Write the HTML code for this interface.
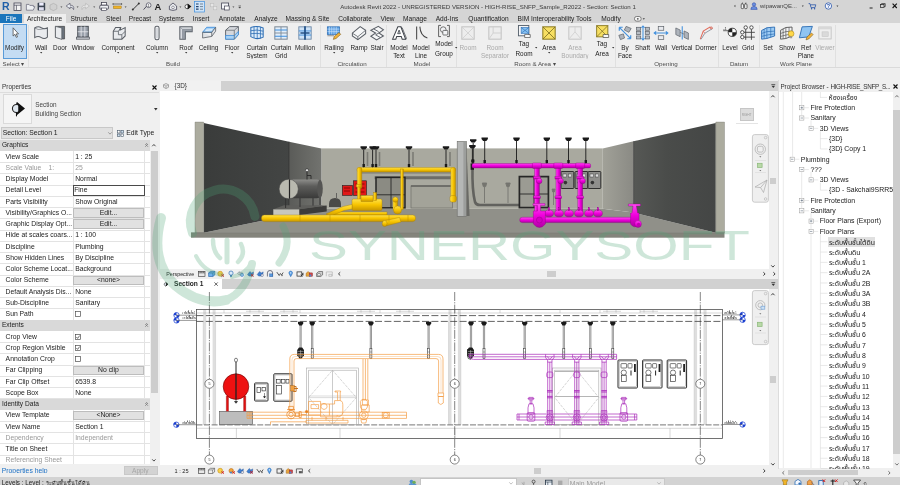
<!DOCTYPE html><html><head><meta charset="utf-8"><title>Autodesk Revit 2022</title><style>
html,body{margin:0;padding:0}
body{width:900px;height:485px;overflow:hidden;position:relative;background:#eeeeee;font-family:"Liberation Sans",sans-serif;font-size:6.4px;color:#222}
.a{position:absolute;white-space:nowrap}
.c{position:absolute;white-space:nowrap;transform:translateX(-50%);text-align:center}
.t{position:absolute;white-space:nowrap;line-height:8px;height:8px}
svg{position:absolute;overflow:visible}
</style></head><body><div id="root" style="position:absolute;left:0;top:0;width:900px;height:485px;will-change:transform">
<div class="a" style="left:0px;top:0px;width:900px;height:13.5px;background:#d5d5d5;"></div>
<div class="t" style="left:488px;top:2.5px;transform:translateX(-50%);font-size:6.1px;color:#3c3c3c">Autodesk Revit 2022 - UNREGISTERED VERSION - HIGH-RISE_SNFP_Sample_R2022 - Section: Section 1</div>
<div class="a" style="left:0px;top:13.5px;width:900px;height:9.5px;background:#d5d5d5;"></div>
<div class="a" style="left:0px;top:14px;width:21.5px;height:8.7px;background:#1b75bb;"></div>
<div class="a" style="left:23.5px;top:13.8px;width:42px;height:9.5px;background:#eeeeee;"></div>
<div class="t" style="left:11px;top:15.100000000000001px;transform:translateX(-50%);color:#fff;font-size:6.6px">File</div>
<div class="t" style="left:44.5px;top:15.100000000000001px;transform:translateX(-50%);color:#222;font-size:6.6px">Architecture</div>
<div class="t" style="left:84px;top:15.100000000000001px;transform:translateX(-50%);color:#222;font-size:6.6px">Structure</div>
<div class="t" style="left:113.5px;top:15.100000000000001px;transform:translateX(-50%);color:#222;font-size:6.6px">Steel</div>
<div class="t" style="left:140px;top:15.100000000000001px;transform:translateX(-50%);color:#222;font-size:6.6px">Precast</div>
<div class="t" style="left:171.5px;top:15.100000000000001px;transform:translateX(-50%);color:#222;font-size:6.6px">Systems</div>
<div class="t" style="left:201px;top:15.100000000000001px;transform:translateX(-50%);color:#222;font-size:6.6px">Insert</div>
<div class="t" style="left:232px;top:15.100000000000001px;transform:translateX(-50%);color:#222;font-size:6.6px">Annotate</div>
<div class="t" style="left:266px;top:15.100000000000001px;transform:translateX(-50%);color:#222;font-size:6.6px">Analyze</div>
<div class="t" style="left:307.5px;top:15.100000000000001px;transform:translateX(-50%);color:#222;font-size:6.6px">Massing &amp; Site</div>
<div class="t" style="left:355px;top:15.100000000000001px;transform:translateX(-50%);color:#222;font-size:6.6px">Collaborate</div>
<div class="t" style="left:387.5px;top:15.100000000000001px;transform:translateX(-50%);color:#222;font-size:6.6px">View</div>
<div class="t" style="left:415px;top:15.100000000000001px;transform:translateX(-50%);color:#222;font-size:6.6px">Manage</div>
<div class="t" style="left:447px;top:15.100000000000001px;transform:translateX(-50%);color:#222;font-size:6.6px">Add-Ins</div>
<div class="t" style="left:488.5px;top:15.100000000000001px;transform:translateX(-50%);color:#222;font-size:6.6px">Quantification</div>
<div class="t" style="left:554.5px;top:15.100000000000001px;transform:translateX(-50%);color:#222;font-size:6.6px">BIM Interoperability Tools</div>
<div class="t" style="left:611px;top:15.100000000000001px;transform:translateX(-50%);color:#222;font-size:6.6px">Modify</div>
<div class="a" style="left:0px;top:23px;width:900px;height:46px;background:#efefef;"></div>
<div class="a" style="left:0px;top:69px;width:900px;height:11px;background:#eeeeee;"></div>
<div class="a" style="left:0px;top:66.6px;width:900px;height:0.7px;background:#dadada;"></div>
<div class="a" style="left:3px;top:24px;width:23.5px;height:34.5px;background:#c4dcf3;border:0.8px solid #5a9bd8;box-sizing:border-box"></div>
<div class="t" style="left:14.5px;top:43.5px;transform:translateX(-50%);color:#222">Modify</div>
<div class="t" style="left:41px;top:43.5px;transform:translateX(-50%);color:#222">Wall</div>
<div class="t" style="left:60px;top:43.5px;transform:translateX(-50%);color:#222">Door</div>
<div class="t" style="left:83px;top:43.5px;transform:translateX(-50%);color:#222">Window</div>
<div class="t" style="left:118px;top:43.5px;transform:translateX(-50%);color:#222">Component</div>
<div class="t" style="left:157px;top:43.5px;transform:translateX(-50%);color:#222">Column</div>
<div class="t" style="left:186px;top:43.5px;transform:translateX(-50%);color:#222">Roof</div>
<div class="t" style="left:208.5px;top:43.5px;transform:translateX(-50%);color:#222">Ceiling</div>
<div class="t" style="left:232px;top:43.5px;transform:translateX(-50%);color:#222">Floor</div>
<div class="t" style="left:257px;top:43.5px;transform:translateX(-50%);color:#222">Curtain</div>
<div class="t" style="left:281px;top:43.5px;transform:translateX(-50%);color:#222">Curtain</div>
<div class="t" style="left:305px;top:43.5px;transform:translateX(-50%);color:#222">Mullion</div>
<div class="t" style="left:334px;top:43.5px;transform:translateX(-50%);color:#222">Railing</div>
<div class="t" style="left:359px;top:43.5px;transform:translateX(-50%);color:#222">Ramp</div>
<div class="t" style="left:377px;top:43.5px;transform:translateX(-50%);color:#222">Stair</div>
<div class="t" style="left:399px;top:43.5px;transform:translateX(-50%);color:#222">Model</div>
<div class="t" style="left:421px;top:43.5px;transform:translateX(-50%);color:#222">Model</div>
<div class="t" style="left:444px;top:40.4px;transform:translateX(-50%);color:#222">Model</div>
<div class="t" style="left:468px;top:43.5px;transform:translateX(-50%);color:#aaa">Room</div>
<div class="t" style="left:495px;top:43.5px;transform:translateX(-50%);color:#aaa">Room</div>
<div class="t" style="left:524px;top:40.4px;transform:translateX(-50%);color:#222">Tag</div>
<div class="t" style="left:549px;top:43.5px;transform:translateX(-50%);color:#222">Area</div>
<div class="t" style="left:575px;top:43.5px;transform:translateX(-50%);color:#aaa">Area</div>
<div class="t" style="left:602px;top:40.4px;transform:translateX(-50%);color:#222">Tag</div>
<div class="t" style="left:625px;top:43.5px;transform:translateX(-50%);color:#222">By</div>
<div class="t" style="left:642.5px;top:43.5px;transform:translateX(-50%);color:#222">Shaft</div>
<div class="t" style="left:661px;top:43.5px;transform:translateX(-50%);color:#222">Wall</div>
<div class="t" style="left:682px;top:43.5px;transform:translateX(-50%);color:#222">Vertical</div>
<div class="t" style="left:706px;top:43.5px;transform:translateX(-50%);color:#222">Dormer</div>
<div class="t" style="left:730px;top:43.5px;transform:translateX(-50%);color:#222">Level</div>
<div class="t" style="left:748px;top:43.5px;transform:translateX(-50%);color:#222">Grid</div>
<div class="t" style="left:768px;top:43.5px;transform:translateX(-50%);color:#222">Set</div>
<div class="t" style="left:787px;top:43.5px;transform:translateX(-50%);color:#222">Show</div>
<div class="t" style="left:806px;top:43.5px;transform:translateX(-50%);color:#222">Ref</div>
<div class="t" style="left:825px;top:43.5px;transform:translateX(-50%);color:#aaa">Viewer</div>
<div class="t" style="left:257px;top:52.9px;transform:translateX(-50%);height:6.6px;overflow:hidden;color:#222"><div style="margin-top:-0.7px">System</div></div>
<div class="t" style="left:281px;top:52.9px;transform:translateX(-50%);height:6.6px;overflow:hidden;color:#222"><div style="margin-top:-0.7px">Grid</div></div>
<div class="t" style="left:399px;top:52.9px;transform:translateX(-50%);height:6.6px;overflow:hidden;color:#222"><div style="margin-top:-0.7px">Text</div></div>
<div class="t" style="left:421px;top:52.9px;transform:translateX(-50%);height:6.6px;overflow:hidden;color:#222"><div style="margin-top:-0.7px">Line</div></div>
<div class="t" style="left:444px;top:50px;transform:translateX(-50%);color:#222">Group</div>
<div class="t" style="left:495px;top:52.9px;transform:translateX(-50%);height:6.6px;overflow:hidden;color:#aaa"><div style="margin-top:-0.7px">Separator</div></div>
<div class="t" style="left:524px;top:50px;transform:translateX(-50%);color:#222">Room</div>
<div class="t" style="left:575px;top:52.9px;transform:translateX(-50%);height:6.6px;overflow:hidden;color:#aaa"><div style="margin-top:-0.7px">Boundary</div></div>
<div class="t" style="left:602px;top:50px;transform:translateX(-50%);color:#222">Area</div>
<div class="t" style="left:625px;top:52.9px;transform:translateX(-50%);height:6.6px;overflow:hidden;color:#222"><div style="margin-top:-0.7px">Face</div></div>
<div class="t" style="left:806px;top:52.9px;transform:translateX(-50%);height:6.6px;overflow:hidden;color:#222"><div style="margin-top:-0.7px">Plane</div></div>
<div class="t" style="left:13.5px;top:60.3px;transform:translateX(-50%);color:#4a4a4a;font-size:6.2px">Select ▾</div>
<div class="t" style="left:173px;top:60.3px;transform:translateX(-50%);color:#4a4a4a;font-size:6.2px">Build</div>
<div class="t" style="left:352px;top:60.3px;transform:translateX(-50%);color:#4a4a4a;font-size:6.2px">Circulation</div>
<div class="t" style="left:422px;top:60.3px;transform:translateX(-50%);color:#4a4a4a;font-size:6.2px">Model</div>
<div class="t" style="left:535px;top:60.3px;transform:translateX(-50%);color:#4a4a4a;font-size:6.2px">Room &amp; Area ▾</div>
<div class="t" style="left:666px;top:60.3px;transform:translateX(-50%);color:#4a4a4a;font-size:6.2px">Opening</div>
<div class="t" style="left:739px;top:60.3px;transform:translateX(-50%);color:#4a4a4a;font-size:6.2px">Datum</div>
<div class="t" style="left:796px;top:60.3px;transform:translateX(-50%);color:#4a4a4a;font-size:6.2px">Work Plane</div>
<div class="a" style="left:27.5px;top:25px;width:0.6px;height:42px;background:#e0e0e0;"></div>
<div class="a" style="left:319.5px;top:25px;width:0.6px;height:42px;background:#e0e0e0;"></div>
<div class="a" style="left:386px;top:25px;width:0.6px;height:42px;background:#e0e0e0;"></div>
<div class="a" style="left:455.5px;top:25px;width:0.6px;height:42px;background:#e0e0e0;"></div>
<div class="a" style="left:615px;top:25px;width:0.6px;height:42px;background:#e0e0e0;"></div>
<div class="a" style="left:718px;top:25px;width:0.6px;height:42px;background:#e0e0e0;"></div>
<div class="a" style="left:758.5px;top:25px;width:0.6px;height:42px;background:#e0e0e0;"></div>
<div class="a" style="left:835px;top:25px;width:0.6px;height:42px;background:#e0e0e0;"></div>
<svg style="left:8.75px;top:26.85px;opacity:1" width="11.5" height="11.5" viewBox="0 0 14 14"><path d="M5 1V11L7.2 8.9L8.9 12.6L10.4 12L8.7 8.4H11.6Z" fill="#fff" stroke="#444" stroke-width="0.9"/></svg>
<svg style="left:33.0px;top:24.799999999999997px;opacity:1" width="16" height="16" viewBox="0 0 14 14"><path d="M1.5 2.6Q4.5 0.6 7.3 2.4Q10 4 12.6 2.6V10.6Q10 12.8 7.3 11Q4.5 9.2 1.5 11Z" fill="#e9ebee" stroke="#5a5f66" stroke-width="0.9"/><path d="M1.5 2.6Q4.5 4.6 7.3 3.8Q10 3 12.6 2.6" fill="none" stroke="#5a5f66" stroke-width="0.5"/></svg>
<svg style="left:52.0px;top:24.799999999999997px;opacity:1" width="16" height="16" viewBox="0 0 14 14"><path d="M3 1.2H11V12.2H9.5L3 10.8Z" fill="#6b727c" stroke="#444" stroke-width="0.6"/><path d="M3 1.2L8.6 2.6V12.6L3 10.8Z" fill="#e9ebee" stroke="#5a5f66" stroke-width="0.7"/></svg>
<svg style="left:75.0px;top:24.799999999999997px;opacity:1" width="16" height="16" viewBox="0 0 14 14"><rect x="2.4" y="1.2" width="9.2" height="9.4" fill="#9aa1ab" stroke="#4a4f56" stroke-width="0.9"/><path d="M5.4 1.2V10.6M8.6 1.2V10.6M2.4 5.9H11.6" stroke="#e8eaee" stroke-width="0.7"/><rect x="1.3" y="10.6" width="11.4" height="1.8" fill="#c9ccd2" stroke="#4a4f56" stroke-width="0.6"/></svg>
<svg style="left:110.5px;top:24.799999999999997px;opacity:1" width="16" height="16" viewBox="0 0 14 14"><path d="M2 5.5L4 2.2H8.5L8 4.5L12.4 2.2V9.6L9.5 12.4H2Z" fill="#e9ebee" stroke="#5a5f66" stroke-width="0.9"/><path d="M2 5.5H6.5V8.5H9.5V12.4M6.5 5.5L8.5 2.2M9.5 8.5L12.4 5.5" fill="none" stroke="#5a5f66" stroke-width="0.7"/></svg>
<svg style="left:149.0px;top:24.799999999999997px;opacity:1" width="16" height="16" viewBox="0 0 14 14"><rect x="5.2" y="1" width="3.6" height="12" rx="1.6" fill="#f4f5f7" stroke="#5a5f66" stroke-width="0.9"/><path d="M7 2.5V11.5" stroke="#b5b9bf" stroke-width="0.8"/></svg>
<svg style="left:178.0px;top:24.799999999999997px;opacity:1" width="16" height="16" viewBox="0 0 14 14"><path d="M1.6 1.6H12.4V5.8H6.4V12.4H1.6Z" fill="#d9dce1" stroke="#5a5f66" stroke-width="0.9"/><path d="M1.6 1.6L4 3.8H12.4M4 3.8V12.4" fill="none" stroke="#8a9099" stroke-width="0.7"/><path d="M4 3.8H12.4V5.8H6.4V12.4H4Z" fill="#7d848e" opacity="0.7"/></svg>
<svg style="left:200.5px;top:24.799999999999997px;opacity:1" width="16" height="16" viewBox="0 0 14 14"><path d="M1.4 6.4L5 2H12.8L9.4 6.4Z" fill="#a9d2f5" stroke="#3f8fdd" stroke-width="0.8"/><path d="M1.4 6.4H9.4L12.8 2V5.4L9.4 10V6.4M1.4 6.4V11.4L9.4 10" fill="#dfe2e6" stroke="#5a5f66" stroke-width="0.7"/><path d="M4 4.6L10 4.2" stroke="#fff" stroke-width="0.8"/></svg>
<svg style="left:224.0px;top:24.799999999999997px;opacity:1" width="16" height="16" viewBox="0 0 14 14"><path d="M1.4 4.6L5 1.4H12.6V8.4L9 12.4H1.4Z" fill="#d5d8dd" stroke="#5a5f66" stroke-width="0.8"/><path d="M1.4 9.2H9L12.6 5.6V8.4L9 12.4H1.4Z" fill="#a9d2f5" stroke="#3f8fdd" stroke-width="0.7"/><path d="M9 4.6V12.4M1.4 4.6H9L12.6 1.4" fill="none" stroke="#5a5f66" stroke-width="0.6"/></svg>
<svg style="left:249.0px;top:24.799999999999997px;opacity:1" width="16" height="16" viewBox="0 0 14 14"><path d="M1.6 2.2Q7 0.4 12.4 2.6V10.6Q7 13.4 1.6 10.2Z" fill="#dcecfa" stroke="#2f6fb5" stroke-width="0.9"/><path d="M1.6 5Q7 3.6 12.4 5.4M1.6 7.6Q7 6.8 12.4 8M4.4 1.6V11.4M7.2 1.4V12M10 1.8V11.6" fill="none" stroke="#2f6fb5" stroke-width="0.7"/></svg>
<svg style="left:273.0px;top:24.799999999999997px;opacity:1" width="16" height="16" viewBox="0 0 14 14"><rect x="1.6" y="1.6" width="10.8" height="10.8" fill="#e2eefa" stroke="#7f8a96" stroke-width="0.9"/><path d="M7 1.6V12.4M1.6 7H12.4" stroke="#7f8a96" stroke-width="0.8"/><path d="M1.6 4.3H12.4M1.6 9.8H12.4" stroke="#3f8fdd" stroke-width="0.9"/></svg>
<svg style="left:297.0px;top:24.799999999999997px;opacity:1" width="16" height="16" viewBox="0 0 14 14"><rect x="1.6" y="1.6" width="10.8" height="10.8" fill="#cfe3f7" stroke="#6f8aa6" stroke-width="0.8"/><path d="M1.6 5.2H12.4M1.6 8.8H12.4" stroke="#3f8fdd" stroke-width="0.8"/><path d="M7 1.2V12.8M3 7H11" stroke="#1f4f86" stroke-width="1.5"/></svg>
<svg style="left:326.0px;top:24.799999999999997px;opacity:1" width="16" height="16" viewBox="0 0 14 14"><rect x="1.2" y="1.6" width="10.6" height="6.6" fill="#5aa0e6" stroke="#2f6fb5" stroke-width="0.7"/><path d="M3 1.6V8.2M5 1.6V8.2M7 1.6V8.2M9 1.6V8.2M1.2 3.6H11.8M1.2 5.8H11.8" stroke="#d6e8fa" stroke-width="0.5"/><path d="M6.4 12.6L7.2 10L11.4 6.6L12.9 8.2L8.8 11.8Z" fill="#f1b33c" stroke="#7a5a1a" stroke-width="0.5"/><path d="M1.2 9.4H7" stroke="#666" stroke-width="0.6"/></svg>
<svg style="left:351.0px;top:24.799999999999997px;opacity:1" width="16" height="16" viewBox="0 0 14 14"><path d="M1.2 7.2L8 1.4L12.8 4.6V7.6L6 12.8L1.2 9.6Z" fill="#f6f7f8" stroke="#5a5f66" stroke-width="0.9"/><path d="M1.2 7.2L6 10.2L12.8 4.6M6 10.2V12.8" fill="none" stroke="#5a5f66" stroke-width="0.7"/></svg>
<svg style="left:369.0px;top:24.799999999999997px;opacity:1" width="16" height="16" viewBox="0 0 14 14"><path d="M8.2 1.2L12.6 4.2L8.6 7L12.6 9.6L6.6 13L1.6 9.8L5.8 7L1.6 4.6Z" fill="#f6f7f8" stroke="#5a5f66" stroke-width="0.9"/><path d="M4 3.4L8.4 5.8M8.6 7L5.8 8.6L10 11" fill="none" stroke="#5a5f66" stroke-width="0.8"/></svg>
<svg style="left:391.0px;top:24.799999999999997px;opacity:1" width="16" height="16" viewBox="0 0 14 14"><path d="M1.4 12.4L6 1.6H8.6L12.8 12.4H9.8L9 10H5L4.2 12.4Z" fill="#fff" stroke="#3c4148" stroke-width="0.9"/><path d="M5.8 7.6H8.2L7.1 4.4Z" fill="#d5d8dd" stroke="#3c4148" stroke-width="0.7"/><path d="M8.6 1.6L9.8 2.4L13.6 11.8L12.8 12.4" fill="none" stroke="#3c4148" stroke-width="0.6"/></svg>
<svg style="left:413.0px;top:24.799999999999997px;opacity:1" width="16" height="16" viewBox="0 0 14 14"><path d="M3.2 1.4V12.6" stroke="#444" stroke-width="0.9"/><path d="M6 1.4Q6.4 9.4 12.6 11.4" fill="none" stroke="#444" stroke-width="0.9"/></svg>
<svg style="left:437.0px;top:24.2px;opacity:1" width="14" height="14" viewBox="0 0 14 14"><path d="M4 1.4H1.6V12.6H4M10 1.4H12.4V12.6H10" fill="none" stroke="#555" stroke-width="0.9"/><circle cx="6.2" cy="5.6" r="2.8" fill="#f2f3f5" stroke="#555" stroke-width="0.8"/><rect x="5.8" y="6.4" width="5" height="4.6" rx="0.8" fill="#f2f3f5" stroke="#555" stroke-width="0.8"/></svg>
<svg style="left:460.0px;top:24.799999999999997px;opacity:1" width="16" height="16" viewBox="0 0 14 14"><rect x="1.6" y="1.6" width="10.8" height="10.8" fill="#ededed" stroke="#c2c2c2" stroke-width="0.9"/><path d="M1.6 1.6L12.4 12.4M12.4 1.6L1.6 12.4" stroke="#cfcfcf" stroke-width="0.7"/></svg>
<svg style="left:487.0px;top:24.799999999999997px;opacity:1" width="16" height="16" viewBox="0 0 14 14"><rect x="1.6" y="1.6" width="10.8" height="10.8" fill="#ededed" stroke="#c2c2c2" stroke-width="0.9"/><path d="M5.4 1.6V7H12.4M5.4 7L1.6 12.4" stroke="#cfcfcf" stroke-width="0.8" fill="none"/></svg>
<svg style="left:516.75px;top:23.95px;opacity:1" width="14.5" height="14.5" viewBox="0 0 14 14"><rect x="1.4" y="1.4" width="10" height="10" fill="#f4f5f7" stroke="#56606c" stroke-width="0.9"/><rect x="4" y="3.4" width="7.4" height="5.6" fill="#86c1f2" stroke="#2f6fb5" stroke-width="0.6"/><path d="M4 3.4L11.4 9M11.4 3.4L4 9" stroke="#2f6fb5" stroke-width="0.6"/><path d="M7.4 10.2H12.8V13H7.4Z" fill="#fff" stroke="#333" stroke-width="0.6"/></svg>
<svg style="left:541.0px;top:24.799999999999997px;opacity:1" width="16" height="16" viewBox="0 0 14 14"><rect x="1.6" y="1.6" width="10.8" height="10.8" fill="#f7df62" stroke="#8a7a20" stroke-width="0.9"/><path d="M1.6 1.6L12.4 12.4M12.4 1.6L1.6 12.4" stroke="#7a6c20" stroke-width="0.7"/></svg>
<svg style="left:567.0px;top:24.799999999999997px;opacity:1" width="16" height="16" viewBox="0 0 14 14"><rect x="1.6" y="1.6" width="10.8" height="10.8" fill="#ededed" stroke="#c6c6c6" stroke-width="0.9"/><path d="M1.6 12.4L7 6L12.4 12.4M7 6V1.6" stroke="#d2d2d2" stroke-width="0.8" fill="none"/></svg>
<svg style="left:594.75px;top:23.95px;opacity:1" width="14.5" height="14.5" viewBox="0 0 14 14"><rect x="1.6" y="1.6" width="10.8" height="10.8" fill="#f7df62" stroke="#8a7a20" stroke-width="0.9"/><path d="M1.6 1.6L12.4 12.4M12.4 1.6L1.6 12.4" stroke="#7a6c20" stroke-width="0.7"/><path d="M7.8 10.2H13.2V13H7.8Z" fill="#fff" stroke="#333" stroke-width="0.6"/></svg>
<svg style="left:617.0px;top:24.799999999999997px;opacity:1" width="16" height="16" viewBox="0 0 14 14"><path d="M2 2L12 12M2 2H5M2 2V5M12 12H9M12 12V9" stroke="#3f8fdd" stroke-width="1" fill="none"/><path d="M8 1.2L12.4 3L10.4 6.4L6.4 4.4Z" fill="#aeb4bc" stroke="#5a5f66" stroke-width="0.6"/><path d="M1.6 9L5.6 7.8L6.6 11.4L3 12.8Z" fill="#aeb4bc" stroke="#5a5f66" stroke-width="0.6"/></svg>
<svg style="left:634.5px;top:24.799999999999997px;opacity:1" width="16" height="16" viewBox="0 0 14 14"><g fill="#b9bec5" stroke="#5a5f66" stroke-width="0.6"><rect x="1.4" y="2" width="3.6" height="2.6"/><rect x="1.4" y="5.8" width="3.6" height="2.6"/><rect x="1.4" y="9.6" width="3.6" height="2.6"/><rect x="9" y="2" width="3.6" height="2.6"/><rect x="9" y="5.8" width="3.6" height="2.6"/><rect x="9" y="9.6" width="3.6" height="2.6"/></g><path d="M7 0.8V13.2M5.6 2.4L7 0.8L8.4 2.4M5.6 11.6L7 13.2L8.4 11.6" stroke="#3f8fdd" stroke-width="0.9" fill="none"/></svg>
<svg style="left:653.0px;top:24.799999999999997px;opacity:1" width="16" height="16" viewBox="0 0 14 14"><g fill="#e8eaee" stroke="#5a5f66" stroke-width="0.6"><rect x="4.6" y="1.2" width="4.8" height="3.4"/><rect x="4.6" y="9.4" width="4.8" height="3.4"/></g><path d="M1 7H13M2.8 5.6L1 7L2.8 8.4M11.2 5.6L13 7L11.2 8.4" stroke="#3f8fdd" stroke-width="0.9" fill="none"/></svg>
<svg style="left:674.0px;top:24.799999999999997px;opacity:1" width="16" height="16" viewBox="0 0 14 14"><path d="M1.6 2.6L5.4 4.4V10.2L1.6 8.4Z" fill="#aeb4bc" stroke="#5a5f66" stroke-width="0.6"/><path d="M8.8 5.2L12.6 7V12.6L8.8 10.8Z" fill="#aeb4bc" stroke="#5a5f66" stroke-width="0.6"/><path d="M7.2 1.2V12.6" stroke="#3f8fdd" stroke-width="0.9"/><path d="M5.4 6.4L8.8 8" stroke="#5a5f66" stroke-width="0.5"/></svg>
<svg style="left:698.0px;top:24.799999999999997px;opacity:1" width="16" height="16" viewBox="0 0 14 14"><path d="M2 12.4L4.6 5.4L10.4 1.8L12.6 3.2" fill="none" stroke="#e06a5a" stroke-width="0.9"/><path d="M2.6 12.6L6 7.2L12.6 3.2" fill="none" stroke="#8a93a0" stroke-width="0.8"/><path d="M4.6 5.4L6 7.2" stroke="#e06a5a" stroke-width="0.7"/><circle cx="11.6" cy="2.6" r="1" fill="#f3b0a6" stroke="#c0483a" stroke-width="0.4"/></svg>
<svg style="left:722.0px;top:24.799999999999997px;opacity:1" width="16" height="16" viewBox="0 0 14 14"><path d="M1 5H6" stroke="#444" stroke-width="0.7"/><text x="1" y="4.2" font-size="3.6" fill="#333" font-family="Liberation Sans,sans-serif">-1</text><circle cx="9" cy="6.4" r="3.6" fill="#fff" stroke="#222" stroke-width="0.7"/><path d="M9 6.4V2.8A3.6 3.6 0 0 0 5.4 6.4ZM9 6.4V10A3.6 3.6 0 0 0 12.6 6.4Z" fill="#222"/></svg>
<svg style="left:740.0px;top:24.799999999999997px;opacity:1" width="16" height="16" viewBox="0 0 14 14"><g fill="none" stroke="#444" stroke-width="0.8"><path d="M5 3.6V13M10 3.6V13M3.4 6.4H13M3.4 10.6H13"/><circle cx="5" cy="2.2" r="1.5" fill="#fff"/><circle cx="10" cy="2.2" r="1.5" fill="#fff"/><circle cx="2" cy="6.4" r="1.5" fill="#fff"/><circle cx="2" cy="10.6" r="1.5" fill="#fff"/></g></svg>
<svg style="left:760.0px;top:24.799999999999997px;opacity:1" width="16" height="16" viewBox="0 0 14 14"><path d="M1.4 4.8L6 2.4L12.8 1.8V9.6L6 11.8L1.4 12.4Z" fill="#9ccbf4" stroke="#2f6fb5" stroke-width="0.8"/><path d="M1.4 7.4L6 5.8L12.8 5.4M1.4 10L6 8.8L12.8 7.8M3.6 3.6V12M6 2.4V11.8M9.4 2V10.8" fill="none" stroke="#2f6fb5" stroke-width="0.6"/></svg>
<svg style="left:779.0px;top:24.799999999999997px;opacity:1" width="16" height="16" viewBox="0 0 14 14"><path d="M1.4 4.6L6 2.2L11.4 1.8V9.6L6 11.8L1.4 12.4Z" fill="#f2f3f5" stroke="#555" stroke-width="0.8"/><path d="M1.4 7.4L6 5.8L11.4 5.4M1.4 10L6 8.8L11.4 7.8M3.6 3.4V12M6 2.2V11.8M8.8 2V10.8" fill="none" stroke="#555" stroke-width="0.6"/><circle cx="10.6" cy="7.6" r="2.5" fill="#ffd84a" stroke="#a8861a" stroke-width="0.5"/><rect x="9.7" y="10" width="1.8" height="1.6" fill="#999"/></svg>
<svg style="left:798.0px;top:24.799999999999997px;opacity:1" width="16" height="16" viewBox="0 0 14 14"><path d="M3.6 1.6L12.6 1.2L9.4 10.4L1.2 11.2Z" fill="#8fc4f2" stroke="#2f6fb5" stroke-width="0.8"/><path d="M7 13L7.8 10.6L11.8 7L13.2 8.4L9.4 12.2Z" fill="#f1b33c" stroke="#7a5a1a" stroke-width="0.5"/></svg>
<svg style="left:817.0px;top:24.799999999999997px;opacity:1" width="16" height="16" viewBox="0 0 14 14"><rect x="1.6" y="1.8" width="10.8" height="10.4" fill="#efefef" stroke="#c4c4c4" stroke-width="0.8"/><rect x="1.6" y="1.8" width="10.8" height="2" fill="#d8d8d8"/><rect x="4.4" y="6" width="5.4" height="4" fill="#dadada" stroke="#c4c4c4" stroke-width="0.5"/></svg>
<svg style="left:39.8px;top:52.3px" width="2.4" height="1.5" viewBox="0 0 6 4"><path d="M0 0H6L3 4Z" fill="#333"/></svg>
<svg style="left:117.3px;top:52.3px" width="2.4" height="1.5" viewBox="0 0 6 4"><path d="M0 0H6L3 4Z" fill="#333"/></svg>
<svg style="left:155.8px;top:52.3px" width="2.4" height="1.5" viewBox="0 0 6 4"><path d="M0 0H6L3 4Z" fill="#333"/></svg>
<svg style="left:184.8px;top:52.3px" width="2.4" height="1.5" viewBox="0 0 6 4"><path d="M0 0H6L3 4Z" fill="#333"/></svg>
<svg style="left:230.8px;top:52.3px" width="2.4" height="1.5" viewBox="0 0 6 4"><path d="M0 0H6L3 4Z" fill="#333"/></svg>
<svg style="left:332.8px;top:52.3px" width="2.4" height="1.5" viewBox="0 0 6 4"><path d="M0 0H6L3 4Z" fill="#333"/></svg>
<svg style="left:547.8px;top:52.3px" width="2.4" height="1.5" viewBox="0 0 6 4"><path d="M0 0H6L3 4Z" fill="#333"/></svg>
<svg style="left:454.8px;top:46.5px" width="2.4" height="1.5" viewBox="0 0 6 4"><path d="M0 0H6L3 4Z" fill="#333"/></svg>
<svg style="left:534.8px;top:46.5px" width="2.4" height="1.5" viewBox="0 0 6 4"><path d="M0 0H6L3 4Z" fill="#333"/></svg>
<svg style="left:612.3px;top:46.5px" width="2.4" height="1.5" viewBox="0 0 6 4"><path d="M0 0H6L3 4Z" fill="#333"/></svg>
<svg style="left:0;top:0" width="900" height="14" viewBox="0 0 900 14"><text x="2" y="10.4" font-size="10.5" font-weight="bold" fill="#1f5fa8" font-family="Liberation Sans,sans-serif">R</text><rect x="14" y="3" width="7" height="7.4" fill="#f4f4f4" stroke="#445" stroke-width="0.8"/><path d="M14 5.2h7M16.4 5.2v5" stroke="#445" stroke-width="0.7"/><path d="M26.4 4.4h2.6l0.8 1h3.6v1.2h1.4l-1.6 3.6h-6.8z" fill="#eef0f3" stroke="#667" stroke-width="0.7"/><rect x="37.6" y="2.8" width="7.6" height="7.6" rx="0.6" fill="#3c4552"/><rect x="39.2" y="2.8" width="4.4" height="2.8" fill="#eef"/><rect x="39" y="7.2" width="4.8" height="3.2" fill="#dde"/><path d="M50 5l3.4-1.6l3.4 1.6v4l-3.4 1.6L50 9z" fill="#d0d0d0" stroke="#aaa" stroke-width="0.6"/><path d="M60.4 6.4h2l-1 1.3z" fill="#444"/><path d="M73.6 9.6Q74.6 5 70 5.2V3.2L66.2 6L70 8.8V7Q72.6 6.8 73.6 9.6Z" fill="#e9edf2" stroke="#556" stroke-width="0.7"/><path d="M76.6 6.4h2l-1 1.3z" fill="#444"/><path d="M82 9.6Q81 5 85.6 5.2V3.2L89.4 6L85.6 8.8V7Q83 6.8 82 9.6Z" fill="#e4e4e4" stroke="#b8b8b8" stroke-width="0.7"/><path d="M93.2 6.4h2l-1 1.3z" fill="#444"/><rect x="101.6" y="2.6" width="5" height="2.6" fill="#fff" stroke="#334" stroke-width="0.7"/><rect x="99.8" y="5.2" width="8.6" height="4" rx="1" fill="#f0f2f5" stroke="#334" stroke-width="0.8"/><rect x="101.6" y="8" width="5" height="2.6" fill="#fff" stroke="#334" stroke-width="0.6"/><rect x="113.4" y="6" width="7.8" height="2.6" fill="#f0b429" stroke="#946a10" stroke-width="0.4"/><path d="M113 4h8.6M113 3v2M121.6 3v2" stroke="#333" stroke-width="0.6"/><path d="M124.6 6.4h2l-1 1.3z" fill="#444"/><path d="M132.6 9.8L139 3.4" stroke="#333" stroke-width="1"/><circle cx="132.8" cy="9.6" r="1" fill="#333"/><circle cx="138.8" cy="3.6" r="1" fill="#333"/><path d="M143.6 9.6L147.6 5" stroke="#445" stroke-width="0.9"/><circle cx="148.6" cy="5.2" r="2.4" fill="#f2f3f5" stroke="#445" stroke-width="0.7"/><text x="147.6" y="6.6" font-size="3.4" fill="#222" font-family="Liberation Sans,sans-serif">1</text><text x="154.4" y="10.2" font-size="9.4" font-weight="bold" fill="#222" font-family="Liberation Sans,sans-serif">A</text><path d="M169.4 6L173 3l3.6 3v3.6q-3.6 1.6-7.2 0z" fill="#e8eaee" stroke="#445" stroke-width="0.8"/><circle cx="173" cy="7.4" r="1.3" fill="#fff" stroke="#445" stroke-width="0.5"/><path d="M179.4 6.4h2l-1 1.3z" fill="#444"/><circle cx="187" cy="6.6" r="2" fill="#fff" stroke="#222" stroke-width="0.7"/><path d="M187.6 3.6L191.4 6.6L187.6 9.6Z" fill="#111"/><rect x="194.4" y="1.6" width="10" height="10.4" fill="#cfe3f7" stroke="#3f8fdd" stroke-width="0.7"/><path d="M196 4h2.6M196 6.6h2.6M196 9.2h2.6" stroke="#1f3f6a" stroke-width="1.2"/><path d="M200 4h3M200 6.6h3M200 9.2h3" stroke="#345" stroke-width="0.6"/><rect x="210.4" y="3.4" width="3.4" height="3.4" fill="#e6e6e6" stroke="#bdbdbd" stroke-width="0.6"/><rect x="213.4" y="6.4" width="3.4" height="3.4" fill="#e6e6e6" stroke="#bdbdbd" stroke-width="0.6"/><rect x="221.6" y="3" width="7" height="6" fill="#f4f5f7" stroke="#445" stroke-width="0.8"/><rect x="224.6" y="6" width="4.6" height="4" fill="#fff" stroke="#445" stroke-width="0.7"/><path d="M232.4 6.4h2l-1 1.3z" fill="#444"/><path d="M238.4 5.8h2.6M238.8 7h1.8l-0.9 1.2z" stroke="#444" stroke-width="0.5" fill="#444"/><path d="M735.4 4.8v2.4l-1.4-1.2z" fill="#444"/><g fill="#f4f4f4" stroke="#333" stroke-width="0.7"><rect x="741.2" y="4" width="2.4" height="4.6" rx="0.8"/><rect x="744.6" y="4" width="2.4" height="4.6" rx="0.8"/></g><path d="M742 4V3h1M745.4 4V3h1" stroke="#333" stroke-width="0.6" fill="none"/><circle cx="754" cy="4.4" r="1.7" fill="#6a8fe0" stroke="#2540a0" stroke-width="0.5"/><path d="M750.8 9.4q0-3 3.2-3t3.2 3z" fill="#6a8fe0" stroke="#2540a0" stroke-width="0.5"/><text x="760" y="8" font-size="6" fill="#444" font-family="Liberation Sans,sans-serif">wipawanQE...</text><path d="M801.8 5.6000000000000005h2l-1 1.3z" fill="#444"/><path d="M808.6 3.6h1.4l1 4h4l0.8-2.8h-5.4" fill="none" stroke="#2a56a8" stroke-width="0.8"/><circle cx="811.6" cy="8.8" r="0.7" fill="#2a56a8"/><circle cx="814.6" cy="8.8" r="0.7" fill="#2a56a8"/><circle cx="828.4" cy="6" r="3.2" fill="#f6f8ff" stroke="#2a56a8" stroke-width="0.8"/><text x="826.8" y="8" font-size="5.4" font-weight="bold" fill="#2a56a8" font-family="Liberation Sans,sans-serif">?</text><path d="M836.4 5.6000000000000005h2l-1 1.3z" fill="#444"/><path d="M869.6 8h3" stroke="#222" stroke-width="1"/><rect x="880.4" y="4.6" width="3.6" height="3" fill="none" stroke="#222" stroke-width="0.7"/><path d="M881.6 4.6V3.6h3.6v3h-1.2" fill="none" stroke="#222" stroke-width="0.7"/><path d="M892.6 3.6l4.2 4.4M896.8 3.6l-4.2 4.4" stroke="#111" stroke-width="1.1"/></svg>
<svg style="left:634px;top:15.6px" width="12" height="6" viewBox="0 0 12 6"><rect x="0.5" y="0.5" width="6.6" height="4.6" rx="2" fill="#f5f5f5" stroke="#555" stroke-width="0.7"/><circle cx="3.8" cy="2.8" r="0.9" fill="#555"/><path d="M8.6 2.2h2.4l-1.2 1.6z" fill="#444"/></svg>
<div class="a" style="left:0px;top:80px;width:159px;height:397px;background:#f0f0f0;"></div>
<div class="a" style="left:0px;top:92px;width:159px;height:0.6px;background:#dddddd;"></div>
<div class="t" style="left:2px;top:83px;color:#333;font-size:6.4px">Properties</div>
<svg style="left:152.2px;top:84.6px" width="5" height="5" viewBox="0 0 10 10"><path d="M1 1L9 9M9 1L1 9" stroke="#111" stroke-width="2.2" fill="none"/></svg>
<div class="a" style="left:2.8px;top:93.5px;width:29.5px;height:30px;background:#f5f5f5;border:0.6px solid #dadada;box-sizing:border-box"></div>
<svg style="left:8.6px;top:99.4px" width="19" height="19" viewBox="0 0 16 16"><circle cx="6.3" cy="8" r="3.4" fill="#dfe7ef" stroke="#222" stroke-width="0.9"/><path d="M6.3 3 L12.3 8 L6.3 13" fill="none" stroke="#111" stroke-width="1.5"/><path d="M7.8 4.4L12.3 8L7.8 11.6Z" fill="#111"/><path d="M6.3 11.4V14.6" stroke="#111" stroke-width="0.9"/></svg>
<div class="t" style="left:35.3px;top:101px;color:#444;font-size:6.4px">Section</div>
<div class="t" style="left:35.3px;top:109.7px;color:#444;font-size:6.4px">Building Section</div>
<svg style="left:154.2px;top:108px" width="3.6" height="2.4" viewBox="0 0 6 4"><path d="M0 0H6L3 4Z" fill="#333"/></svg>
<div class="a" style="left:1px;top:126.6px;width:112.2px;height:12.6px;background:#e1e1e1;border:0.6px solid #c8c8c8;box-sizing:border-box"></div>
<div class="t" style="left:2.8px;top:129.2px;color:#222;font-size:6.8px">Section: Section 1</div>
<svg style="left:107.8px;top:131.8px" width="4" height="2.6" viewBox="0 0 8 5"><path d="M0.5 0.5L4 4.2L7.5 0.5" stroke="#555" stroke-width="1" fill="none"/></svg>
<svg style="left:116.5px;top:129.5px" width="7" height="7" viewBox="0 0 14 14"><rect x="1" y="1" width="5" height="5" fill="#fff" stroke="#456" stroke-width="1.2"/><rect x="8" y="1" width="5" height="5" fill="#cfe0f0" stroke="#456" stroke-width="1.2"/><rect x="1" y="8" width="5" height="5" fill="#cfe0f0" stroke="#456" stroke-width="1.2"/><rect x="8" y="8" width="5" height="5" fill="#fff" stroke="#456" stroke-width="1.2"/></svg>
<div class="t" style="left:126.2px;top:129px;color:#222;font-size:6.8px">Edit Type</div>
<div class="a" style="left:0px;top:139.9px;width:150px;height:328.25px;background:#ffffff;"></div>
<div class="a" style="left:0px;top:140.3px;width:150px;height:10.65px;background:#d9d9d9;"></div>
<div class="t" style="left:1.9px;top:141.32500000000002px;color:#222;font-size:6.6px">Graphics</div>
<svg style="left:144.6px;top:143.12500000000003px" width="3.2" height="4.4" viewBox="0 0 8 11"><path d="M1 4.5L4 1.5L7 4.5M1 9L4 6L7 9" stroke="#333" stroke-width="1.5" fill="none"/></svg>
<div class="a" style="left:0px;top:162.1px;width:150px;height:0.5px;background:#e3e3e3;"></div>
<div class="a" style="left:72.5px;top:151.15px;width:0.5px;height:11.25px;background:#e3e3e3;"></div>
<div class="a" style="left:144.4px;top:151.15px;width:0.5px;height:11.25px;background:#e3e3e3;"></div>
<div class="t" style="left:5.6px;top:152.57500000000002px;color:#222;font-size:6.8px">View Scale</div>
<div class="t" style="left:75.2px;top:152.57500000000002px;color:#222;font-size:6.8px">1 : 25</div>
<div class="a" style="left:0px;top:173.35px;width:150px;height:0.5px;background:#e3e3e3;"></div>
<div class="a" style="left:72.5px;top:162.4px;width:0.5px;height:11.25px;background:#e3e3e3;"></div>
<div class="a" style="left:144.4px;top:162.4px;width:0.5px;height:11.25px;background:#e3e3e3;"></div>
<div class="t" style="left:5.6px;top:163.82500000000002px;color:#999;font-size:6.8px">Scale Value</div>
<div class="t" style="left:75.2px;top:163.82500000000002px;color:#999;font-size:6.8px">25</div>
<div class="a" style="left:0px;top:184.6px;width:150px;height:0.5px;background:#e3e3e3;"></div>
<div class="a" style="left:72.5px;top:173.65px;width:0.5px;height:11.25px;background:#e3e3e3;"></div>
<div class="a" style="left:144.4px;top:173.65px;width:0.5px;height:11.25px;background:#e3e3e3;"></div>
<div class="t" style="left:5.6px;top:175.07500000000002px;color:#222;font-size:6.8px">Display Model</div>
<div class="t" style="left:75.2px;top:175.07500000000002px;color:#222;font-size:6.8px">Normal</div>
<div class="a" style="left:0px;top:195.85px;width:150px;height:0.5px;background:#e3e3e3;"></div>
<div class="a" style="left:72.5px;top:184.9px;width:0.5px;height:11.25px;background:#e3e3e3;"></div>
<div class="a" style="left:144.4px;top:184.9px;width:0.5px;height:11.25px;background:#e3e3e3;"></div>
<div class="t" style="left:5.6px;top:186.32500000000002px;color:#222;font-size:6.8px">Detail Level</div>
<div class="a" style="left:73.2px;top:185.20000000000002px;width:71.4px;height:10.45px;background:#fff;border:0.6px solid #4a4a4a;box-sizing:border-box"></div>
<div class="t" style="left:74.2px;top:186.32500000000002px;color:#222;font-size:6.8px">Fine</div>
<div class="a" style="left:0px;top:207.1px;width:150px;height:0.5px;background:#e3e3e3;"></div>
<div class="a" style="left:72.5px;top:196.15px;width:0.5px;height:11.25px;background:#e3e3e3;"></div>
<div class="a" style="left:144.4px;top:196.15px;width:0.5px;height:11.25px;background:#e3e3e3;"></div>
<div class="t" style="left:5.6px;top:197.57500000000002px;color:#222;font-size:6.8px">Parts Visibility</div>
<div class="t" style="left:75.2px;top:197.57500000000002px;color:#222;font-size:6.8px">Show Original</div>
<div class="a" style="left:0px;top:218.35px;width:150px;height:0.5px;background:#e3e3e3;"></div>
<div class="a" style="left:72.5px;top:207.4px;width:0.5px;height:11.25px;background:#e3e3e3;"></div>
<div class="a" style="left:144.4px;top:207.4px;width:0.5px;height:11.25px;background:#e3e3e3;"></div>
<div class="t" style="left:5.6px;top:208.82500000000002px;color:#222;font-size:6.8px">Visibility/Graphics O...</div>
<div class="a" style="left:73.4px;top:208.0px;width:70.6px;height:9.85px;background:#e1e1e1;border:0.5px solid #bdbdbd;box-sizing:border-box"></div>
<div class="t" style="left:108.5px;top:208.82500000000002px;transform:translateX(-50%);color:#222;font-size:6.8px">Edit...</div>
<div class="a" style="left:0px;top:229.6px;width:150px;height:0.5px;background:#e3e3e3;"></div>
<div class="a" style="left:72.5px;top:218.65px;width:0.5px;height:11.25px;background:#e3e3e3;"></div>
<div class="a" style="left:144.4px;top:218.65px;width:0.5px;height:11.25px;background:#e3e3e3;"></div>
<div class="t" style="left:5.6px;top:220.07500000000002px;color:#222;font-size:6.8px">Graphic Display Opt...</div>
<div class="a" style="left:73.4px;top:219.25px;width:70.6px;height:9.85px;background:#e1e1e1;border:0.5px solid #bdbdbd;box-sizing:border-box"></div>
<div class="t" style="left:108.5px;top:220.07500000000002px;transform:translateX(-50%);color:#222;font-size:6.8px">Edit...</div>
<div class="a" style="left:0px;top:240.85px;width:150px;height:0.5px;background:#e3e3e3;"></div>
<div class="a" style="left:72.5px;top:229.9px;width:0.5px;height:11.25px;background:#e3e3e3;"></div>
<div class="a" style="left:144.4px;top:229.9px;width:0.5px;height:11.25px;background:#e3e3e3;"></div>
<div class="t" style="left:5.6px;top:231.32500000000002px;color:#222;font-size:6.8px">Hide at scales coars...</div>
<div class="t" style="left:75.2px;top:231.32500000000002px;color:#222;font-size:6.8px">1 : 100</div>
<div class="a" style="left:0px;top:252.1px;width:150px;height:0.5px;background:#e3e3e3;"></div>
<div class="a" style="left:72.5px;top:241.15px;width:0.5px;height:11.25px;background:#e3e3e3;"></div>
<div class="a" style="left:144.4px;top:241.15px;width:0.5px;height:11.25px;background:#e3e3e3;"></div>
<div class="t" style="left:5.6px;top:242.57500000000002px;color:#222;font-size:6.8px">Discipline</div>
<div class="t" style="left:75.2px;top:242.57500000000002px;color:#222;font-size:6.8px">Plumbing</div>
<div class="a" style="left:0px;top:263.34999999999997px;width:150px;height:0.5px;background:#e3e3e3;"></div>
<div class="a" style="left:72.5px;top:252.4px;width:0.5px;height:11.25px;background:#e3e3e3;"></div>
<div class="a" style="left:144.4px;top:252.4px;width:0.5px;height:11.25px;background:#e3e3e3;"></div>
<div class="t" style="left:5.6px;top:253.825px;color:#222;font-size:6.8px">Show Hidden Lines</div>
<div class="t" style="left:75.2px;top:253.825px;color:#222;font-size:6.8px">By Discipline</div>
<div class="a" style="left:0px;top:274.59999999999997px;width:150px;height:0.5px;background:#e3e3e3;"></div>
<div class="a" style="left:72.5px;top:263.65px;width:0.5px;height:11.25px;background:#e3e3e3;"></div>
<div class="a" style="left:144.4px;top:263.65px;width:0.5px;height:11.25px;background:#e3e3e3;"></div>
<div class="t" style="left:5.6px;top:265.075px;color:#222;font-size:6.8px">Color Scheme Locat...</div>
<div class="t" style="left:75.2px;top:265.075px;color:#222;font-size:6.8px">Background</div>
<div class="a" style="left:0px;top:285.84999999999997px;width:150px;height:0.5px;background:#e3e3e3;"></div>
<div class="a" style="left:72.5px;top:274.9px;width:0.5px;height:11.25px;background:#e3e3e3;"></div>
<div class="a" style="left:144.4px;top:274.9px;width:0.5px;height:11.25px;background:#e3e3e3;"></div>
<div class="t" style="left:5.6px;top:276.325px;color:#222;font-size:6.8px">Color Scheme</div>
<div class="a" style="left:73.4px;top:275.5px;width:70.6px;height:9.85px;background:#e1e1e1;border:0.5px solid #bdbdbd;box-sizing:border-box"></div>
<div class="t" style="left:108.5px;top:276.325px;transform:translateX(-50%);color:#222;font-size:6.8px">&lt;none&gt;</div>
<div class="a" style="left:0px;top:297.09999999999997px;width:150px;height:0.5px;background:#e3e3e3;"></div>
<div class="a" style="left:72.5px;top:286.15px;width:0.5px;height:11.25px;background:#e3e3e3;"></div>
<div class="a" style="left:144.4px;top:286.15px;width:0.5px;height:11.25px;background:#e3e3e3;"></div>
<div class="t" style="left:5.6px;top:287.575px;color:#222;font-size:6.8px">Default Analysis Dis...</div>
<div class="t" style="left:75.2px;top:287.575px;color:#222;font-size:6.8px">None</div>
<div class="a" style="left:0px;top:308.34999999999997px;width:150px;height:0.5px;background:#e3e3e3;"></div>
<div class="a" style="left:72.5px;top:297.4px;width:0.5px;height:11.25px;background:#e3e3e3;"></div>
<div class="a" style="left:144.4px;top:297.4px;width:0.5px;height:11.25px;background:#e3e3e3;"></div>
<div class="t" style="left:5.6px;top:298.825px;color:#222;font-size:6.8px">Sub-Discipline</div>
<div class="t" style="left:75.2px;top:298.825px;color:#222;font-size:6.8px">Sanitary</div>
<div class="a" style="left:0px;top:319.59999999999997px;width:150px;height:0.5px;background:#e3e3e3;"></div>
<div class="a" style="left:72.5px;top:308.65px;width:0.5px;height:11.25px;background:#e3e3e3;"></div>
<div class="a" style="left:144.4px;top:308.65px;width:0.5px;height:11.25px;background:#e3e3e3;"></div>
<div class="t" style="left:5.6px;top:310.075px;color:#222;font-size:6.8px">Sun Path</div>
<svg style="left:74.6px;top:311.075px" width="6" height="6" viewBox="0 0 10 10"><rect x="0.7" y="0.7" width="8.6" height="8.6" fill="#fff" stroke="#444" stroke-width="1.1"/></svg>
<div class="a" style="left:0px;top:320.29999999999995px;width:150px;height:10.65px;background:#d9d9d9;"></div>
<div class="t" style="left:1.9px;top:321.325px;color:#222;font-size:6.6px">Extents</div>
<svg style="left:144.6px;top:323.125px" width="3.2" height="4.4" viewBox="0 0 8 11"><path d="M1 4.5L4 1.5L7 4.5M1 9L4 6L7 9" stroke="#333" stroke-width="1.5" fill="none"/></svg>
<div class="a" style="left:0px;top:342.09999999999997px;width:150px;height:0.5px;background:#e3e3e3;"></div>
<div class="a" style="left:72.5px;top:331.15px;width:0.5px;height:11.25px;background:#e3e3e3;"></div>
<div class="a" style="left:144.4px;top:331.15px;width:0.5px;height:11.25px;background:#e3e3e3;"></div>
<div class="t" style="left:5.6px;top:332.575px;color:#222;font-size:6.8px">Crop View</div>
<svg style="left:74.6px;top:333.575px" width="6" height="6" viewBox="0 0 10 10"><rect x="0.7" y="0.7" width="8.6" height="8.6" fill="#fff" stroke="#444" stroke-width="1.1"/><path d="M2.3 5L4.3 7.3L7.8 2.6" stroke="#333" stroke-width="1.2" fill="none"/></svg>
<div class="a" style="left:0px;top:353.34999999999997px;width:150px;height:0.5px;background:#e3e3e3;"></div>
<div class="a" style="left:72.5px;top:342.4px;width:0.5px;height:11.25px;background:#e3e3e3;"></div>
<div class="a" style="left:144.4px;top:342.4px;width:0.5px;height:11.25px;background:#e3e3e3;"></div>
<div class="t" style="left:5.6px;top:343.825px;color:#222;font-size:6.8px">Crop Region Visible</div>
<svg style="left:74.6px;top:344.825px" width="6" height="6" viewBox="0 0 10 10"><rect x="0.7" y="0.7" width="8.6" height="8.6" fill="#fff" stroke="#444" stroke-width="1.1"/><path d="M2.3 5L4.3 7.3L7.8 2.6" stroke="#333" stroke-width="1.2" fill="none"/></svg>
<div class="a" style="left:0px;top:364.59999999999997px;width:150px;height:0.5px;background:#e3e3e3;"></div>
<div class="a" style="left:72.5px;top:353.65px;width:0.5px;height:11.25px;background:#e3e3e3;"></div>
<div class="a" style="left:144.4px;top:353.65px;width:0.5px;height:11.25px;background:#e3e3e3;"></div>
<div class="t" style="left:5.6px;top:355.075px;color:#222;font-size:6.8px">Annotation Crop</div>
<svg style="left:74.6px;top:356.075px" width="6" height="6" viewBox="0 0 10 10"><rect x="0.7" y="0.7" width="8.6" height="8.6" fill="#fff" stroke="#444" stroke-width="1.1"/></svg>
<div class="a" style="left:0px;top:375.84999999999997px;width:150px;height:0.5px;background:#e3e3e3;"></div>
<div class="a" style="left:72.5px;top:364.9px;width:0.5px;height:11.25px;background:#e3e3e3;"></div>
<div class="a" style="left:144.4px;top:364.9px;width:0.5px;height:11.25px;background:#e3e3e3;"></div>
<div class="t" style="left:5.6px;top:366.325px;color:#222;font-size:6.8px">Far Clipping</div>
<div class="a" style="left:73.4px;top:365.5px;width:70.6px;height:9.85px;background:#e1e1e1;border:0.5px solid #bdbdbd;box-sizing:border-box"></div>
<div class="t" style="left:108.5px;top:366.325px;transform:translateX(-50%);color:#222;font-size:6.8px">No clip</div>
<div class="a" style="left:0px;top:387.09999999999997px;width:150px;height:0.5px;background:#e3e3e3;"></div>
<div class="a" style="left:72.5px;top:376.15px;width:0.5px;height:11.25px;background:#e3e3e3;"></div>
<div class="a" style="left:144.4px;top:376.15px;width:0.5px;height:11.25px;background:#e3e3e3;"></div>
<div class="t" style="left:5.6px;top:377.575px;color:#222;font-size:6.8px">Far Clip Offset</div>
<div class="t" style="left:75.2px;top:377.575px;color:#222;font-size:6.8px">6539.8</div>
<div class="a" style="left:0px;top:398.34999999999997px;width:150px;height:0.5px;background:#e3e3e3;"></div>
<div class="a" style="left:72.5px;top:387.4px;width:0.5px;height:11.25px;background:#e3e3e3;"></div>
<div class="a" style="left:144.4px;top:387.4px;width:0.5px;height:11.25px;background:#e3e3e3;"></div>
<div class="t" style="left:5.6px;top:388.825px;color:#222;font-size:6.8px">Scope Box</div>
<div class="t" style="left:75.2px;top:388.825px;color:#222;font-size:6.8px">None</div>
<div class="a" style="left:0px;top:399.04999999999995px;width:150px;height:10.65px;background:#d9d9d9;"></div>
<div class="t" style="left:1.9px;top:400.075px;color:#222;font-size:6.6px">Identity Data</div>
<svg style="left:144.6px;top:401.875px" width="3.2" height="4.4" viewBox="0 0 8 11"><path d="M1 4.5L4 1.5L7 4.5M1 9L4 6L7 9" stroke="#333" stroke-width="1.5" fill="none"/></svg>
<div class="a" style="left:0px;top:420.84999999999997px;width:150px;height:0.5px;background:#e3e3e3;"></div>
<div class="a" style="left:72.5px;top:409.9px;width:0.5px;height:11.25px;background:#e3e3e3;"></div>
<div class="a" style="left:144.4px;top:409.9px;width:0.5px;height:11.25px;background:#e3e3e3;"></div>
<div class="t" style="left:5.6px;top:411.325px;color:#222;font-size:6.8px">View Template</div>
<div class="a" style="left:73.4px;top:410.5px;width:70.6px;height:9.85px;background:#e1e1e1;border:0.5px solid #bdbdbd;box-sizing:border-box"></div>
<div class="t" style="left:108.5px;top:411.325px;transform:translateX(-50%);color:#222;font-size:6.8px">&lt;None&gt;</div>
<div class="a" style="left:0px;top:432.09999999999997px;width:150px;height:0.5px;background:#e3e3e3;"></div>
<div class="a" style="left:72.5px;top:421.15px;width:0.5px;height:11.25px;background:#e3e3e3;"></div>
<div class="a" style="left:144.4px;top:421.15px;width:0.5px;height:11.25px;background:#e3e3e3;"></div>
<div class="t" style="left:5.6px;top:422.575px;color:#222;font-size:6.8px">View Name</div>
<div class="t" style="left:75.2px;top:422.575px;color:#222;font-size:6.8px">Section 1</div>
<div class="a" style="left:0px;top:443.34999999999997px;width:150px;height:0.5px;background:#e3e3e3;"></div>
<div class="a" style="left:72.5px;top:432.4px;width:0.5px;height:11.25px;background:#e3e3e3;"></div>
<div class="a" style="left:144.4px;top:432.4px;width:0.5px;height:11.25px;background:#e3e3e3;"></div>
<div class="t" style="left:5.6px;top:433.825px;color:#999;font-size:6.8px">Dependency</div>
<div class="t" style="left:75.2px;top:433.825px;color:#999;font-size:6.8px">Independent</div>
<div class="a" style="left:0px;top:454.59999999999997px;width:150px;height:0.5px;background:#e3e3e3;"></div>
<div class="a" style="left:72.5px;top:443.65px;width:0.5px;height:11.25px;background:#e3e3e3;"></div>
<div class="a" style="left:144.4px;top:443.65px;width:0.5px;height:11.25px;background:#e3e3e3;"></div>
<div class="t" style="left:5.6px;top:445.075px;color:#222;font-size:6.8px">Title on Sheet</div>
<div class="t" style="left:75.2px;top:445.075px;color:#222;font-size:6.8px"></div>
<div class="a" style="left:0px;top:465.84999999999997px;width:150px;height:0.5px;background:#e3e3e3;"></div>
<div class="a" style="left:72.5px;top:454.9px;width:0.5px;height:11.25px;background:#e3e3e3;"></div>
<div class="a" style="left:144.4px;top:454.9px;width:0.5px;height:11.25px;background:#e3e3e3;"></div>
<div class="t" style="left:5.6px;top:456.325px;color:#999;font-size:6.8px">Referencing Sheet</div>
<div class="t" style="left:75.2px;top:456.325px;color:#999;font-size:6.8px"></div>
<div class="t" style="left:48.6px;top:163.82500000000002px;color:#999;font-size:6.8px">1:</div>
<div class="a" style="left:150px;top:139.9px;width:8.5px;height:326px;background:#f0f0f0;"></div>
<div class="a" style="left:150.6px;top:151px;width:7.3px;height:242px;background:#cdcdcd;"></div>
<svg style="left:152.4px;top:144px" width="3.8" height="2.6" viewBox="0 0 8 5"><path d="M0.5 4.5L4 0.8L7.5 4.5" stroke="#222" stroke-width="1.7" fill="none"/></svg>
<svg style="left:152.4px;top:459px" width="3.8" height="2.6" viewBox="0 0 8 5"><path d="M0.5 0.5L4 4.2L7.5 0.5" stroke="#222" stroke-width="1.7" fill="none"/></svg>
<div class="a" style="left:0px;top:464.4px;width:159px;height:12.6px;background:#f0f0f0;"></div>
<div class="t" style="left:1.8px;top:466.6px;height:6.9px;overflow:hidden;color:#1a6fc4;font-size:6.8px">Properties help</div>
<div class="a" style="left:123.7px;top:465.5px;width:34px;height:9.5px;background:#d3d3d3;border:0.5px solid #c8c8c8;box-sizing:border-box"></div>
<div class="t" style="left:140.3px;top:466.7px;transform:translateX(-50%);color:#a6a6a6;font-size:6.6px">Apply</div>
<div class="a" style="left:0px;top:476.8px;width:900px;height:9px;background:#d3d3d3;"></div>
<div class="t" style="left:1.8px;top:478.5px;color:#222;font-size:6.3px">Levels : Level : <span style="font-size:5.5px">ระดับพื้นชั้นใต้ดิน</span></div>
<div class="a" style="left:778.4px;top:80px;width:121.6px;height:396.8px;background:#f0f0f0;"></div>
<div class="a" style="left:778.4px;top:92px;width:114.6px;height:376px;background:#ffffff;"></div>
<div class="a" style="left:778.4px;top:80px;width:0.6px;height:396px;background:#dcdcdc;"></div>
<div class="t" style="left:780.4px;top:83px;color:#333;font-size:6.3px">Project Browser - <span style="letter-spacing:-0.32px">HIGH-RISE_SNFP_S...</span></div>
<svg style="left:893.4px;top:84.4px" width="5" height="5" viewBox="0 0 10 10"><path d="M1 1L9 9M9 1L1 9" stroke="#111" stroke-width="2.2" fill="none"/></svg>
<div class="t" style="left:828.6px;top:94.2px;color:#1a1a1a;font-size:6.9px;font-family:'Liberation Sans','Noto Sans Thai','Noto Sans CJK SC',sans-serif;">ห้องเครื่อง</div>
<div class="t" style="left:810.4px;top:104.01px;color:#1a1a1a;font-size:6.9px;">Fire Protection</div>
<div class="t" style="left:810.4px;top:114.32000000000001px;color:#1a1a1a;font-size:6.9px;">Sanitary</div>
<div class="t" style="left:819.7px;top:124.63000000000001px;color:#1a1a1a;font-size:6.9px;">3D Views</div>
<div class="t" style="left:829px;top:134.94000000000003px;color:#1a1a1a;font-size:6.9px;">{3D}</div>
<div class="t" style="left:829px;top:145.25000000000003px;color:#1a1a1a;font-size:6.9px;">{3D} Copy 1</div>
<div class="t" style="left:800.8px;top:155.56px;color:#1a1a1a;font-size:6.9px;">Plumbing</div>
<div class="t" style="left:810.4px;top:165.87px;color:#1a1a1a;font-size:6.9px;">???</div>
<div class="t" style="left:819.7px;top:176.18px;color:#1a1a1a;font-size:6.9px;">3D Views</div>
<div class="t" style="left:829px;top:186.49px;color:#1a1a1a;font-size:6.9px;">{3D - Sakchai9SRR5</div>
<div class="t" style="left:810.4px;top:196.8px;color:#1a1a1a;font-size:6.9px;">Fire Protection</div>
<div class="t" style="left:810.4px;top:207.11px;color:#1a1a1a;font-size:6.9px;">Sanitary</div>
<div class="t" style="left:819.7px;top:217.42000000000002px;color:#1a1a1a;font-size:6.9px;">Floor Plans (Export)</div>
<div class="t" style="left:819.7px;top:227.73000000000002px;color:#1a1a1a;font-size:6.9px;">Floor Plans</div>
<div class="a" style="left:827.8px;top:237.14000000000001px;width:47.5px;height:9.4px;background:#e0e0e0;"></div>
<div class="t" style="left:829px;top:238.54000000000002px;color:#1a1a1a;font-size:6.9px;font-family:'Liberation Sans','Noto Sans Thai','Noto Sans CJK SC',sans-serif;">ระดับพื้นชั้นใต้ดิน</div>
<div class="t" style="left:829px;top:248.85000000000002px;color:#1a1a1a;font-size:6.9px;font-family:'Liberation Sans','Noto Sans Thai','Noto Sans CJK SC',sans-serif;">ระดับพื้นดิน</div>
<div class="t" style="left:829px;top:259.16px;color:#1a1a1a;font-size:6.9px;font-family:'Liberation Sans','Noto Sans Thai','Noto Sans CJK SC',sans-serif;">ระดับพื้นชั้น 1</div>
<div class="t" style="left:829px;top:269.47px;color:#1a1a1a;font-size:6.9px;font-family:'Liberation Sans','Noto Sans Thai','Noto Sans CJK SC',sans-serif;">ระดับพื้นชั้น 2A</div>
<div class="t" style="left:829px;top:279.78000000000003px;color:#1a1a1a;font-size:6.9px;font-family:'Liberation Sans','Noto Sans Thai','Noto Sans CJK SC',sans-serif;">ระดับพื้นชั้น 2B</div>
<div class="t" style="left:829px;top:290.09000000000003px;color:#1a1a1a;font-size:6.9px;font-family:'Liberation Sans','Noto Sans Thai','Noto Sans CJK SC',sans-serif;">ระดับพื้นชั้น 3A</div>
<div class="t" style="left:829px;top:300.40000000000003px;color:#1a1a1a;font-size:6.9px;font-family:'Liberation Sans','Noto Sans Thai','Noto Sans CJK SC',sans-serif;">ระดับพื้นชั้น 3B</div>
<div class="t" style="left:829px;top:310.71000000000004px;color:#1a1a1a;font-size:6.9px;font-family:'Liberation Sans','Noto Sans Thai','Noto Sans CJK SC',sans-serif;">ระดับพื้นชั้น 4</div>
<div class="t" style="left:829px;top:321.02000000000004px;color:#1a1a1a;font-size:6.9px;font-family:'Liberation Sans','Noto Sans Thai','Noto Sans CJK SC',sans-serif;">ระดับพื้นชั้น 5</div>
<div class="t" style="left:829px;top:331.33000000000004px;color:#1a1a1a;font-size:6.9px;font-family:'Liberation Sans','Noto Sans Thai','Noto Sans CJK SC',sans-serif;">ระดับพื้นชั้น 6</div>
<div class="t" style="left:829px;top:341.64000000000004px;color:#1a1a1a;font-size:6.9px;font-family:'Liberation Sans','Noto Sans Thai','Noto Sans CJK SC',sans-serif;">ระดับพื้นชั้น 7</div>
<div class="t" style="left:829px;top:351.95px;color:#1a1a1a;font-size:6.9px;font-family:'Liberation Sans','Noto Sans Thai','Noto Sans CJK SC',sans-serif;">ระดับพื้นชั้น 8</div>
<div class="t" style="left:829px;top:362.26000000000005px;color:#1a1a1a;font-size:6.9px;font-family:'Liberation Sans','Noto Sans Thai','Noto Sans CJK SC',sans-serif;">ระดับพื้นชั้น 9</div>
<div class="t" style="left:829px;top:372.57px;color:#1a1a1a;font-size:6.9px;font-family:'Liberation Sans','Noto Sans Thai','Noto Sans CJK SC',sans-serif;">ระดับพื้นชั้น 10</div>
<div class="t" style="left:829px;top:382.88000000000005px;color:#1a1a1a;font-size:6.9px;font-family:'Liberation Sans','Noto Sans Thai','Noto Sans CJK SC',sans-serif;">ระดับพื้นชั้น 11</div>
<div class="t" style="left:829px;top:393.19px;color:#1a1a1a;font-size:6.9px;font-family:'Liberation Sans','Noto Sans Thai','Noto Sans CJK SC',sans-serif;">ระดับพื้นชั้น 12</div>
<div class="t" style="left:829px;top:403.50000000000006px;color:#1a1a1a;font-size:6.9px;font-family:'Liberation Sans','Noto Sans Thai','Noto Sans CJK SC',sans-serif;">ระดับพื้นชั้น 13</div>
<div class="t" style="left:829px;top:413.81px;color:#1a1a1a;font-size:6.9px;font-family:'Liberation Sans','Noto Sans Thai','Noto Sans CJK SC',sans-serif;">ระดับพื้นชั้น 14</div>
<div class="t" style="left:829px;top:424.12000000000006px;color:#1a1a1a;font-size:6.9px;font-family:'Liberation Sans','Noto Sans Thai','Noto Sans CJK SC',sans-serif;">ระดับพื้นชั้น 15</div>
<div class="t" style="left:829px;top:434.43px;color:#1a1a1a;font-size:6.9px;font-family:'Liberation Sans','Noto Sans Thai','Noto Sans CJK SC',sans-serif;">ระดับพื้นชั้น 16</div>
<div class="t" style="left:829px;top:444.74000000000007px;color:#1a1a1a;font-size:6.9px;font-family:'Liberation Sans','Noto Sans Thai','Noto Sans CJK SC',sans-serif;">ระดับพื้นชั้น 17</div>
<div class="t" style="left:829px;top:455.05px;color:#1a1a1a;font-size:6.9px;font-family:'Liberation Sans','Noto Sans Thai','Noto Sans CJK SC',sans-serif;">ระดับพื้นชั้น 18</div>
<div class="t" style="left:829px;top:465.36000000000007px;color:#1a1a1a;font-size:6.9px;font-family:'Liberation Sans','Noto Sans Thai','Noto Sans CJK SC',sans-serif;">ระดับพื้นชั้น 19</div>
<svg style="left:0;top:0" width="900" height="485" viewBox="0 0 900 485"><g stroke="#d2d2d2" stroke-width="0.5" fill="none"><path d="M820.0 97.4H827.1"/><rect x="799.6999999999999" y="105.61000000000001" width="4.2" height="4.2" fill="#fff" stroke="#999"/><path d="M800.5999999999999 107.71000000000001H803.0" stroke="#456"/><path d="M801.8 106.51V108.91000000000001" stroke="#456"/><path d="M804.0999999999999 107.71000000000001H808.9"/><rect x="799.6999999999999" y="115.92000000000002" width="4.2" height="4.2" fill="#fff" stroke="#999"/><path d="M800.5999999999999 118.02000000000001H803.0" stroke="#456"/><path d="M804.0999999999999 118.02000000000001H808.9"/><rect x="809.0" y="126.23000000000002" width="4.2" height="4.2" fill="#fff" stroke="#999"/><path d="M809.9 128.33H812.3000000000001" stroke="#456"/><path d="M813.4 128.33H818.2"/><path d="M820.4 138.64000000000001H827.5"/><path d="M820.4 148.95000000000002H827.5"/><rect x="790.0999999999999" y="157.16" width="4.2" height="4.2" fill="#fff" stroke="#999"/><path d="M790.9999999999999 159.26H793.4" stroke="#456"/><path d="M794.4999999999999 159.26H799.3"/><rect x="799.6999999999999" y="167.47" width="4.2" height="4.2" fill="#fff" stroke="#999"/><path d="M800.5999999999999 169.57H803.0" stroke="#456"/><path d="M804.0999999999999 169.57H808.9"/><rect x="809.0" y="177.78" width="4.2" height="4.2" fill="#fff" stroke="#999"/><path d="M809.9 179.88H812.3000000000001" stroke="#456"/><path d="M813.4 179.88H818.2"/><path d="M820.4 190.19H827.5"/><rect x="799.6999999999999" y="198.4" width="4.2" height="4.2" fill="#fff" stroke="#999"/><path d="M800.5999999999999 200.5H803.0" stroke="#456"/><path d="M801.8 199.3V201.7" stroke="#456"/><path d="M804.0999999999999 200.5H808.9"/><rect x="799.6999999999999" y="208.71" width="4.2" height="4.2" fill="#fff" stroke="#999"/><path d="M800.5999999999999 210.81H803.0" stroke="#456"/><path d="M804.0999999999999 210.81H808.9"/><rect x="809.0" y="219.02" width="4.2" height="4.2" fill="#fff" stroke="#999"/><path d="M809.9 221.12H812.3000000000001" stroke="#456"/><path d="M811.1 219.92000000000002V222.32" stroke="#456"/><path d="M813.4 221.12H818.2"/><rect x="809.0" y="229.33" width="4.2" height="4.2" fill="#fff" stroke="#999"/><path d="M809.9 231.43H812.3000000000001" stroke="#456"/><path d="M813.4 231.43H818.2"/><path d="M820.4 241.74H827.5"/><path d="M820.4 252.05H827.5"/><path d="M820.4 262.36H827.5"/><path d="M820.4 272.67H827.5"/><path d="M820.4 282.98H827.5"/><path d="M820.4 293.29H827.5"/><path d="M820.4 303.6H827.5"/><path d="M820.4 313.91H827.5"/><path d="M820.4 324.22H827.5"/><path d="M820.4 334.53000000000003H827.5"/><path d="M820.4 344.84000000000003H827.5"/><path d="M820.4 355.15H827.5"/><path d="M820.4 365.46000000000004H827.5"/><path d="M820.4 375.77H827.5"/><path d="M820.4 386.08000000000004H827.5"/><path d="M820.4 396.39H827.5"/><path d="M820.4 406.70000000000005H827.5"/><path d="M820.4 417.01H827.5"/><path d="M820.4 427.32000000000005H827.5"/><path d="M820.4 437.63H827.5"/><path d="M820.4 447.94000000000005H827.5"/><path d="M820.4 458.25H827.5"/><path d="M820.4 468.56000000000006H827.5"/><path d="M783.3 92V468"/><path d="M792.6 92V156.95999999999998"/><path d="M801.7 92V105.41000000000001M801.7 110.01V115.72000000000001"/><path d="M801.7 171.87V198.2M801.7 202.8V208.51"/><path d="M811 120.32000000000001V126.03000000000002M811 171.87V177.57999999999998"/><path d="M811 213.11V218.82M811 223.42000000000002V229.13M811 233.73000000000002V468"/><path d="M820.4 92V97.4M820.4 131.33V148.95000000000002M820.4 182.88V190.19M820.4 234.43V468"/></g></svg>
<div class="a" style="left:893px;top:92px;width:7px;height:376px;background:#f0f0f0;"></div>
<div class="a" style="left:893.4px;top:109.5px;width:6.6px;height:344.5px;background:#cdcdcd;"></div>
<svg style="left:894.5px;top:95px" width="3.8" height="2.6" viewBox="0 0 8 5"><path d="M0.5 4.5L4 0.8L7.5 4.5" stroke="#333" stroke-width="1.4" fill="none"/></svg>
<svg style="left:894.5px;top:462.5px" width="3.8" height="2.6" viewBox="0 0 8 5"><path d="M0.5 0.5L4 4.2L7.5 0.5" stroke="#333" stroke-width="1.4" fill="none"/></svg>
<div class="a" style="left:778.4px;top:468.6px;width:121.6px;height:8.2px;background:#f0f0f0;"></div>
<div class="a" style="left:787.7px;top:469.6px;width:70.4px;height:5.8px;background:#cdcdcd;"></div>
<svg style="left:782px;top:470.7px" width="2.6" height="3.8" viewBox="0 0 5 8"><path d="M4.5 0.5L0.8 4L4.5 7.5" stroke="#333" stroke-width="1.4" fill="none"/></svg>
<svg style="left:887.7px;top:470.7px" width="2.6" height="3.8" viewBox="0 0 5 8"><path d="M0.5 0.5L4.2 4L0.5 7.5" stroke="#333" stroke-width="1.4" fill="none"/></svg>
<div class="a" style="left:159px;top:80px;width:619.4px;height:396.8px;background:#f0f0f0;"></div>
<div class="a" style="left:160px;top:81.2px;width:617.6px;height:10px;background:#d1d1d1;"></div>
<div class="a" style="left:160px;top:81.2px;width:61px;height:10px;background:#f1f1f1;"></div>
<svg style="left:163px;top:83.2px" width="6" height="6" viewBox="0 0 12 12"><path d="M6 1L11 3.5V8.5L6 11L1 8.5V3.5Z" fill="#e8e8e8" stroke="#666" stroke-width="1"/><path d="M1 3.5L6 6L11 3.5M6 6V11" fill="none" stroke="#666" stroke-width="0.8"/></svg>
<div class="t" style="left:174.5px;top:82.4px;color:#333;font-size:6.4px">{3D}</div>
<svg style="left:770.5px;top:84px" width="4.6" height="4.4" viewBox="0 0 9 9"><path d="M0.5 1H8.5" stroke="#333" stroke-width="1.4"/><path d="M0.8 3.5H8.2L4.5 8Z" fill="#333"/></svg>
<div class="a" style="left:160px;top:91.2px;width:609px;height:178px;background:#ffffff;"></div>
<div class="a" style="left:160px;top:279px;width:617.6px;height:10.3px;background:#d1d1d1;"></div>
<div class="a" style="left:160px;top:279px;width:61.5px;height:10.3px;background:#ffffff;"></div>
<svg style="left:162.8px;top:281px" width="6.5" height="6.5" viewBox="0 0 16 16"><circle cx="6.3" cy="8" r="3.4" fill="#dfe7ef" stroke="#222" stroke-width="1.2"/><path d="M6.3 3 L12.3 8 L6.3 13" fill="none" stroke="#111" stroke-width="1.8"/><path d="M7.8 4.4L12.3 8L7.8 11.6Z" fill="#111"/></svg>
<div class="t" style="left:174px;top:280.4px;color:#222;font-size:6.6px;font-weight:bold">Section 1</div>
<svg style="left:213.6px;top:282.3px" width="4.2" height="4.2" viewBox="0 0 10 10"><path d="M1 1L9 9M9 1L1 9" stroke="#222" stroke-width="1.6" fill="none"/></svg>
<svg style="left:770.5px;top:282px" width="4.6" height="4.4" viewBox="0 0 9 9"><path d="M0.5 1H8.5" stroke="#333" stroke-width="1.4"/><path d="M0.8 3.5H8.2L4.5 8Z" fill="#333"/></svg>
<div class="a" style="left:160px;top:289.3px;width:609px;height:176px;background:#ffffff;"></div>
<div class="t" style="left:166.2px;top:270px;color:#222;font-size:5.35px">Perspective</div>
<div class="t" style="left:174.5px;top:466.8px;color:#222;font-size:5.6px">1 : 25</div>
<svg style="left:771.1px;top:95.10000000000001px" width="3.8" height="2.6" viewBox="0 0 8 5"><path d="M0.5 4.5L4 0.8L7.5 4.5" stroke="#222" stroke-width="1.8" fill="none"/></svg>
<svg style="left:771.1px;top:265.09999999999997px" width="3.8" height="2.6" viewBox="0 0 8 5"><path d="M0.5 0.5L4 4.2L7.5 0.5" stroke="#222" stroke-width="1.8" fill="none"/></svg>
<div class="a" style="left:770px;top:177.7px;width:5.8px;height:6.8px;background:#cdcdcd;"></div>
<svg style="left:771.1px;top:293.2px" width="3.8" height="2.6" viewBox="0 0 8 5"><path d="M0.5 4.5L4 0.8L7.5 4.5" stroke="#222" stroke-width="1.8" fill="none"/></svg>
<svg style="left:771.1px;top:462.7px" width="3.8" height="2.6" viewBox="0 0 8 5"><path d="M0.5 0.5L4 4.2L7.5 0.5" stroke="#222" stroke-width="1.8" fill="none"/></svg>
<div class="a" style="left:770px;top:375.5px;width:5.8px;height:7.8px;background:#cdcdcd;"></div>
<div class="a" style="left:547.4px;top:270.6px;width:8.4px;height:6.2px;background:#cdcdcd;"></div>
<svg style="left:763.0px;top:271.8px" width="2.6" height="3.8" viewBox="0 0 5 8"><path d="M0.5 0.5L4.2 4L0.5 7.5" stroke="#222" stroke-width="1.8" fill="none"/></svg>
<svg style="left:772.7px;top:271.8px" width="2.6" height="3.8" viewBox="0 0 5 8"><path d="M0.5 0.5L4.2 4L0.5 7.5" stroke="#222" stroke-width="1.8" fill="none"/></svg>
<div class="a" style="left:533.6px;top:468px;width:7.6px;height:6.4px;background:#cdcdcd;"></div>
<svg style="left:763.2px;top:469.3px" width="2.6" height="3.8" viewBox="0 0 5 8"><path d="M0.5 0.5L4.2 4L0.5 7.5" stroke="#222" stroke-width="1.8" fill="none"/></svg>
<svg style="left:338.09999999999997px;top:272.0px" width="2.6" height="3.8" viewBox="0 0 5 8"><path d="M4.5 0.5L0.8 4L4.5 7.5" stroke="#222" stroke-width="1.8" fill="none"/></svg>
<svg style="left:308.2px;top:468.90000000000003px" width="2.6" height="3.8" viewBox="0 0 5 8"><path d="M4.5 0.5L0.8 4L4.5 7.5" stroke="#222" stroke-width="1.8" fill="none"/></svg>
<svg style="left:0;top:0" width="900" height="485" viewBox="0 0 900 485"><rect x="198.60000000000002" y="271.29999999999995" width="6.4" height="5" fill="#e8e8e8" stroke="#333" stroke-width="0.6"/><path d="M198.60000000000002 272.9H205.0M200.20000000000002 271.29999999999995V272.9M201.8 271.29999999999995V272.9M203.4 271.29999999999995V272.9" stroke="#333" stroke-width="0.5"/><path d="M208.6 272.9L210.6 271.29999999999995H214.79999999999998V274.9L212.79999999999998 276.5H208.6Z" fill="#6fb1ee" stroke="#1f5fa8" stroke-width="0.6"/><path d="M208.6 272.9H212.79999999999998V276.5M212.79999999999998 272.9L214.79999999999998 271.29999999999995" fill="none" stroke="#1f5fa8" stroke-width="0.5"/><circle cx="220.2" cy="273.7" r="2.4" fill="#f9d24a" stroke="#c48a10" stroke-width="0.6"/><path d="M221.4 274.29999999999995l2.6 2.4M224 274.29999999999995l-2.6 2.4" stroke="#d01818" stroke-width="0.9"/><circle cx="231" cy="273.09999999999997" r="2.1" fill="#dcebfa" stroke="#2f6fb5" stroke-width="0.7"/><rect x="230" y="275.2" width="2" height="1.5" fill="#2f6fb5"/><path d="M237.4 273.29999999999995l2-1.8v1.2h3v1.4h-3v1z" fill="#dfe5ec" stroke="#667" stroke-width="0.4"/><circle cx="242.0" cy="274.9" r="1.6" fill="#8ec0f0" stroke="#2f6fb5" stroke-width="0.5"/><path d="M247.5 274.5l2.4-3l1.6 1.4l2-1l-0.6 4.2h-4z" fill="#3f7fd0" stroke="#1f4f96" stroke-width="0.4"/><path d="M250.89999999999998 274.09999999999997l2.6 2.4M253.5 274.09999999999997l-2.6 2.4" stroke="#d01818" stroke-width="0.9"/><path d="M257.2 274.5l2.4-3l1.6 1.4l2-1l-0.6 4.2h-4z" fill="#3f7fd0" stroke="#1f4f96" stroke-width="0.4"/><circle cx="262.2" cy="275.29999999999995" r="1.2" fill="#e8eef6" stroke="#446" stroke-width="0.4"/><path d="M267.4 276.5V272.9a2.6 2.4 0 0 1 5.2 0V276.5" fill="#e9edf2" stroke="#445" stroke-width="0.7"/><rect x="269.6" y="273.9" width="3.2" height="2.8" fill="#5a9be0" stroke="#1f4f96" stroke-width="0.4"/><path d="M276.8 272.09999999999997l2.4 3.4l1.2-2l1.2 1.4l1.6-2.4" fill="none" stroke="#333" stroke-width="0.8"/><circle cx="282" cy="275.29999999999995" r="0.9" fill="#777"/><path d="M290.7 276.7l-1.6-3a1.8 1.8 0 1 1 3.2 0z" fill="#5aa0e8" stroke="#1f5fa8" stroke-width="0.5"/><circle cx="290.7" cy="272.9" r="0.6" fill="#fff"/><rect x="297" y="271.9" width="4.8" height="4.2" fill="#f2f2f2" stroke="#222" stroke-width="0.7"/><path d="M301.8 273.9l1.6-1.4v3.2z" fill="#222"/><path d="M300.6 274.5l2.2 2M302.8 274.5l-2.2 2" stroke="#222" stroke-width="0.6"/><path d="M306.1 276.29999999999995V273.29999999999995l2-1.8l2 1.8v3z" fill="#e8a33c" stroke="#8a5a10" stroke-width="0.4"/><rect x="309.3" y="272.9" width="3.2" height="3.4" fill="#d04848" stroke="#802020" stroke-width="0.4"/><circle cx="310.3" cy="275.5" r="1.1" fill="#4a88d8"/><path d="M316.6 273.29999999999995L318.6 271.5H322.6V274.9L320.8 276.5H316.6Z" fill="#cfcfcf" stroke="#444" stroke-width="0.6"/><circle cx="319.0" cy="274.7" r="1.5" fill="#eee" stroke="#444" stroke-width="0.5"/><path d="M326.3 271.9H332.3M326.3 271.9V276.29999999999995M332.3 271.9V276.29999999999995M328.8 274.29999999999995h3v2h-3z" fill="none" stroke="#aaa" stroke-width="0.6"/></svg>
<svg style="left:0;top:0" width="900" height="485" viewBox="0 0 900 485"><rect x="198.4" y="468.29999999999995" width="6.4" height="5" fill="#e8e8e8" stroke="#333" stroke-width="0.6"/><path d="M198.4 469.9H204.79999999999998M200.0 468.29999999999995V469.9M201.6 468.29999999999995V469.9M203.2 468.29999999999995V469.9" stroke="#333" stroke-width="0.5"/><path d="M208.4 469.9L210.4 468.29999999999995H214.6V471.9L212.6 473.5H208.4Z" fill="#efefef" stroke="#444" stroke-width="0.6"/><path d="M208.4 469.9H212.6V473.5M212.6 469.9L214.6 468.29999999999995" fill="none" stroke="#444" stroke-width="0.5"/><circle cx="220.2" cy="470.7" r="2.4" fill="#f9d24a" stroke="#c48a10" stroke-width="0.6"/><path d="M221.4 471.29999999999995l2.6 2.4M224 471.29999999999995l-2.6 2.4" stroke="#d01818" stroke-width="0.9"/><circle cx="231.2" cy="470.7" r="2.2" fill="#f4a63a" stroke="#b86a10" stroke-width="0.6"/><path d="M232.4 471.29999999999995l2.6 2.4M235 471.29999999999995l-2.6 2.4" stroke="#d01818" stroke-width="0.9"/><circle cx="231" cy="472.5" r="1" fill="#3f7fd0"/><path d="M237.4 471.5l2.4-3l1.6 1.4l2-1l-0.6 4.2h-4z" fill="#3f7fd0" stroke="#1f4f96" stroke-width="0.4"/><circle cx="242.4" cy="472.29999999999995" r="1.2" fill="#e8eef6" stroke="#446" stroke-width="0.4"/><path d="M246.8 471.5l2.4-3l1.6 1.4l2-1l-0.6 4.2h-4z" fill="#3f7fd0" stroke="#1f4f96" stroke-width="0.4"/><path d="M250.2 471.09999999999997l2.6 2.4M252.8 471.09999999999997l-2.6 2.4" stroke="#d01818" stroke-width="0.9"/><path d="M256.8 469.09999999999997l2.4 3.4l1.2-2l1.2 1.4l1.6-2.4" fill="none" stroke="#333" stroke-width="0.8"/><circle cx="262" cy="472.29999999999995" r="0.9" fill="#777"/><path d="M269.4 473.7l-1.6-3a1.8 1.8 0 1 1 3.2 0z" fill="#5aa0e8" stroke="#1f5fa8" stroke-width="0.5"/><circle cx="269.4" cy="469.9" r="0.6" fill="#fff"/><rect x="277" y="468.9" width="4.8" height="4.2" fill="#f2f2f2" stroke="#222" stroke-width="0.7"/><path d="M281.8 470.9l1.6-1.4v3.2z" fill="#222"/><path d="M280.6 471.5l2.2 2M282.8 471.5l-2.2 2" stroke="#222" stroke-width="0.6"/><path d="M286.2 473.29999999999995V470.29999999999995l2-1.8l2 1.8v3z" fill="#e8a33c" stroke="#8a5a10" stroke-width="0.4"/><rect x="289.4" y="469.9" width="3.2" height="3.4" fill="#d04848" stroke="#802020" stroke-width="0.4"/><circle cx="290.4" cy="472.5" r="1.1" fill="#4a88d8"/><path d="M296.4 468.9H302.4M296.4 468.9V473.29999999999995M302.4 468.9V473.29999999999995" fill="none" stroke="#333" stroke-width="0.7"/><rect x="298.9" y="471.09999999999997" width="3" height="2.2" fill="#555"/></svg>
<div class="a" style="left:739.6px;top:107.6px;width:14px;height:13.4px;background:#dcdcdc;border:0.5px solid #c6c6c6;box-sizing:border-box"></div>
<div class="t" style="left:746.6px;top:110.5px;transform:translateX(-50%);color:#999;font-size:3.2px">RIGHT</div>
<div class="a" style="left:736px;top:122.8px;width:22px;height:0.5px;background:#e4e4e4;"></div>
<svg style="left:0;top:0" width="900" height="485" viewBox="0 0 900 485"><g fill="none" stroke="#b9b9b9" stroke-width="0.7"><rect x="752.4" y="134.6" width="16" height="67.6" rx="2.2" fill="#efefef"/><circle cx="765.6" cy="137.6" r="1.3"/><circle cx="765.6" cy="199" r="1.3"/><circle cx="760.3" cy="149.2" r="5.2" stroke="#aaa"/><rect x="757.4" y="146.3" width="5.8" height="5.8" rx="1.6" stroke="#aaa"/><path d="M755 160.5H766M755 172.5H766" stroke="#ddd"/><rect x="757.5" y="163.3" width="4.6" height="4.2" fill="#b9d9a8" stroke="#8ab878"/><path d="M755 187L767 180L763.5 192.5L760.6 187.6Z" stroke="#aaa"/><path d="M760.6 187.6L767 180" stroke="#aaa"/></g><g fill="#666"><path d="M759.3 156.3h2l-1 1.2z"/><path d="M759.3 170h2l-1 1.2z"/></g></svg>
<svg style="left:0;top:0" width="900" height="485" viewBox="0 0 900 485"><g fill="none" stroke="#b9b9b9" stroke-width="0.7"><rect x="752.4" y="290.6" width="16" height="54" rx="2.2" fill="#efefef"/><circle cx="765.6" cy="293.6" r="1.3"/><circle cx="765.6" cy="341.6" r="1.3"/><circle cx="760.3" cy="305.2" r="4.6" stroke="#aaa"/><circle cx="760.3" cy="305.2" r="2.3" stroke="#aaa"/><rect x="761" y="306.2" width="3.8" height="3" fill="#cfe2f5" stroke="#7aa7d8"/><path d="M755 317H766M755 333H766" stroke="#ddd"/><rect x="757.5" y="322.3" width="4.6" height="4.2" fill="#b9d9a8" stroke="#8ab878"/></g><g fill="#666"><path d="M759.3 313.3h2l-1 1.2z"/><path d="M759.3 330h2l-1 1.2z"/></g></svg>
<svg style="left:0;top:0" width="900" height="485" viewBox="0 0 900 485"><defs>
<linearGradient id="gl" x1="0" x2="1" y1="0" y2="0"><stop offset="0" stop-color="#3a3c3b"/><stop offset="1" stop-color="#434544"/></linearGradient>
<linearGradient id="gl2" x1="0" x2="1" y1="0" y2="0"><stop offset="0" stop-color="#5a5b58"/><stop offset="1" stop-color="#72736f"/></linearGradient>
<linearGradient id="gr" x1="0" x2="1" y1="0" y2="0"><stop offset="0" stop-color="#565855"/><stop offset="0.4" stop-color="#4a4c4a"/><stop offset="1" stop-color="#444645"/></linearGradient>
<linearGradient id="gr2" x1="0" x2="1" y1="0" y2="0"><stop offset="0" stop-color="#a1a198"/><stop offset="1" stop-color="#8a8a84"/></linearGradient>
<linearGradient id="gt" x1="0" x2="0" y1="0" y2="1"><stop offset="0" stop-color="#8d8d8a"/><stop offset="0.35" stop-color="#5d5d5b"/><stop offset="1" stop-color="#3a3a39"/></linearGradient>
<linearGradient id="gy" x1="0" x2="0" y1="0" y2="1"><stop offset="0" stop-color="#ffe24a"/><stop offset="0.5" stop-color="#f7c400"/><stop offset="1" stop-color="#c79600"/></linearGradient>
<linearGradient id="gyv" x1="0" x2="1" y1="0" y2="0"><stop offset="0" stop-color="#ffe24a"/><stop offset="0.5" stop-color="#f7c400"/><stop offset="1" stop-color="#c79600"/></linearGradient>
<linearGradient id="gm" x1="0" x2="0" y1="0" y2="1"><stop offset="0" stop-color="#ff4cf2"/><stop offset="0.5" stop-color="#f000dc"/><stop offset="1" stop-color="#b000a4"/></linearGradient>
<linearGradient id="gmv" x1="0" x2="1" y1="0" y2="0"><stop offset="0" stop-color="#ff4cf2"/><stop offset="0.5" stop-color="#f000dc"/><stop offset="1" stop-color="#b000a4"/></linearGradient>
</defs><path d="M203.7 232.7L289 215.2L321.4 208.8H602.7L633.6 212.6L715.8 232.7Z" fill="#909089"/><rect x="321.4" y="148.4" width="281.3" height="60.4" fill="#a9a99f"/><path d="M360 172.6H455" stroke="#8b8b84" stroke-width="2.4" fill="none"/><path d="M374.6 177.8H452" stroke="#6c6c68" stroke-width="3" fill="none"/><rect x="411" y="186" width="41.5" height="22" fill="#a3a399" stroke="#75756f" stroke-width="0.8"/><path d="M411 186H452.5" stroke="#63635f" stroke-width="1.6"/><path d="M466.2 141.5L469.6 216H466.2Z" fill="#6a6a66"/><path d="M472.5 168Q472 190 475 202Q476 205 480 205H519" fill="none" stroke="#62625e" stroke-width="2.6"/><g stroke="#7c7c75" stroke-width="1.6"><path d="M367.5 152V166M379.5 152V166M413 152V166M450 152V166"/></g><path d="M482.3 183h4.4l-1 3.6h-2.4zM484.5 186.6V203" fill="#75756f" stroke="#75756f" stroke-width="0.9"/><path d="M505.8 183h4.4l-1 3.6h-2.4zM508 186.6V203" fill="#75756f" stroke="#75756f" stroke-width="0.9"/><path d="M527.3 183h4.4l-1 3.6h-2.4zM529.5 186.6V203" fill="#75756f" stroke="#75756f" stroke-width="0.9"/><path d="M552 189h3l-0.7 3h-1.6zM553.5 192V205" fill="#75756f" stroke="#75756f" stroke-width="0.8"/><rect x="376" y="177.4" width="29" height="30.4" fill="#8b8b83" stroke="#262626" stroke-width="1.5"/><path d="M391 177.4V207.8M376 194.8H405" stroke="#262626" stroke-width="0.9"/><rect x="519.4" y="176.6" width="29" height="31" fill="#9b9b93" stroke="#262626" stroke-width="1.7"/><path d="M534 176.6V207.6M519.4 194H548.4" stroke="#262626" stroke-width="0.9"/><path d="M289 141.7L321.4 148.4V208.8L289 215.2Z" fill="url(#gl2)"/><path d="M203.7 123L289 141.7V215.2L203.7 232.7Z" fill="url(#gl)"/><path d="M289 141.7V215.2" stroke="#2e2e2e" stroke-width="0.6"/><path d="M195 122.1H203.7V232.7H195Z" fill="#acac9f" stroke="#7c7c74" stroke-width="0.4"/><path d="M602.7 148.4L633.6 141.2V212.6L602.7 208.8Z" fill="url(#gr2)"/><path d="M633.6 141.2L715.8 123V232.7L633.6 212.6Z" fill="url(#gr)"/><path d="M633.6 141.2V212.6" stroke="#333" stroke-width="0.6"/><path d="M715.8 122.1H724.5V232.7H715.8Z" fill="#acac9f" stroke="#7c7c74" stroke-width="0.4"/><rect x="191" y="232.7" width="533.5" height="5" fill="#84847c"/><path d="M191 232.7H724.5" stroke="#6c6c66" stroke-width="0.5"/><rect x="457.2" y="141.3" width="9.2" height="75" fill="#b5b7b6" stroke="#6f6f6b" stroke-width="0.6"/><rect x="463.4" y="141.6" width="2.7" height="74.4" fill="#9c9e9c"/><path d="M299.2 209.2L326.7 205.6V211.6L299.2 215Z" fill="#3c3c3a"/><path d="M273.3 209.2H299.2V215H273.3Z" fill="#c7c7bd"/><path d="M273.3 209.2L284 205.2H326.7L299.2 209.2Z" fill="#5e5e5b"/><g stroke="#333" stroke-width="1"><path d="M285.6 197V208M300 197V207M313 196V205.6M320 195V205"/></g><rect x="288.5" y="179.6" width="32" height="18.6" rx="4" fill="url(#gt)"/><ellipse cx="320" cy="188.8" rx="2.8" ry="9" fill="#555553"/><ellipse cx="288.7" cy="189" rx="9.6" ry="9.8" fill="#b9b9af" stroke="#444" stroke-width="0.5"/><path d="M289.5 179.4V198.6" stroke="#222" stroke-width="1.2"/><path d="M307 171.5V179.5M307 175.5H311V179" stroke="#222" stroke-width="0.8" fill="none"/><circle cx="307" cy="170.2" r="1.5" fill="#eee" stroke="#222" stroke-width="0.6"/><path d="M329 207V204Q329 198 335 198Q341 198 341 204V207Z" fill="#4a4a48"/><path d="M336.5 193V198" stroke="#444" stroke-width="0.7"/><rect x="342.3" y="185.4" width="10.2" height="10" fill="#e01818" stroke="#222" stroke-width="0.6"/><rect x="353.5" y="180.8" width="13" height="14.6" fill="#e01818" stroke="#222" stroke-width="0.6"/><path d="M344 188h6M344 191h6M355.5 184h9M355.5 188h9M355.5 192h9" stroke="#7a0000" stroke-width="0.8"/><path d="M363.7 149.6V168" stroke="#1a1a1a" stroke-width="0.9"/><path d="M360.5 146.2H366.9V147.6L365.3 149.6H362.09999999999997L360.5 147.6Z" fill="#1a1a1a"/><rect x="362.5" y="164" width="2.4" height="3" fill="#1a1a1a"/><path d="M372.6 149.6V168" stroke="#1a1a1a" stroke-width="0.9"/><path d="M369.40000000000003 146.2H375.8V147.6L374.20000000000005 149.6H371.0L369.40000000000003 147.6Z" fill="#1a1a1a"/><rect x="371.40000000000003" y="164" width="2.4" height="3" fill="#1a1a1a"/><path d="M376 149.6V168" stroke="#1a1a1a" stroke-width="0.9"/><path d="M372.8 146.2H379.2V147.6L377.6 149.6H374.4L372.8 147.6Z" fill="#1a1a1a"/><rect x="374.8" y="164" width="2.4" height="3" fill="#1a1a1a"/><path d="M409 149.6V168" stroke="#1a1a1a" stroke-width="0.9"/><path d="M405.8 146.2H412.2V147.6L410.6 149.6H407.4L405.8 147.6Z" fill="#1a1a1a"/><rect x="407.8" y="164" width="2.4" height="3" fill="#1a1a1a"/><path d="M446 149.6V168" stroke="#1a1a1a" stroke-width="0.9"/><path d="M442.8 146.2H449.2V147.6L447.6 149.6H444.4L442.8 147.6Z" fill="#1a1a1a"/><rect x="444.8" y="164" width="2.4" height="3" fill="#1a1a1a"/><path d="M473.2 142.6V163.5" stroke="#1a1a1a" stroke-width="0.9"/><path d="M470.0 139.2H476.4V140.6L474.8 142.6H471.59999999999997L470.0 140.6Z" fill="#1a1a1a"/><rect x="472.0" y="159.5" width="2.4" height="3" fill="#1a1a1a"/><path d="M472.4 148.4V163.5" stroke="#1a1a1a" stroke-width="0.9"/><path d="M469.2 145.0H475.59999999999997V146.4L474.0 148.4H470.79999999999995L469.2 146.4Z" fill="#1a1a1a"/><rect x="471.2" y="159.5" width="2.4" height="3" fill="#1a1a1a"/><path d="M484.7 141V164" stroke="#1a1a1a" stroke-width="0.9"/><path d="M481.5 137.6H487.9V139L486.3 141H483.09999999999997L481.5 139Z" fill="#1a1a1a"/><rect x="483.5" y="160" width="2.4" height="3" fill="#1a1a1a"/><path d="M516.5 141V164" stroke="#1a1a1a" stroke-width="0.9"/><path d="M513.3 137.6H519.7V139L518.1 141H514.9L513.3 139Z" fill="#1a1a1a"/><rect x="515.3" y="160" width="2.4" height="3" fill="#1a1a1a"/><path d="M546.8 141V164" stroke="#1a1a1a" stroke-width="0.9"/><path d="M543.5999999999999 137.6H550.0V139L548.4 141H545.1999999999999L543.5999999999999 139Z" fill="#1a1a1a"/><rect x="545.5999999999999" y="160" width="2.4" height="3" fill="#1a1a1a"/><path d="M568.5 141V164" stroke="#1a1a1a" stroke-width="0.9"/><path d="M565.3 137.6H571.7V139L570.1 141H566.9L565.3 139Z" fill="#1a1a1a"/><rect x="567.3" y="160" width="2.4" height="3" fill="#1a1a1a"/><path d="M585.8 141V164" stroke="#1a1a1a" stroke-width="0.9"/><path d="M582.5999999999999 137.6H589.0V139L587.4 141H584.1999999999999L582.5999999999999 139Z" fill="#1a1a1a"/><rect x="584.5999999999999" y="160" width="2.4" height="3" fill="#1a1a1a"/><rect x="357.2" y="167.6" width="98" height="4.4" rx="1.5" fill="url(#gy)" stroke="#a87f00" stroke-width="0.4"/><rect x="357.2" y="167.6" width="4.6" height="21" rx="1.5" fill="url(#gyv)" stroke="#a87f00" stroke-width="0.4"/><rect x="357.4" y="186" width="3" height="14" fill="url(#gyv)" stroke="#a87f00" stroke-width="0.4"/><rect x="356.4" y="184.6" width="5" height="2.4" fill="url(#gyv)" stroke="#a87f00" stroke-width="0.4"/><rect x="450.8" y="167.6" width="4.8" height="30" rx="1.8" fill="url(#gyv)" stroke="#a87f00" stroke-width="0.4"/><rect x="450" y="195.5" width="6.4" height="6.6" rx="2" fill="url(#gyv)" stroke="#a87f00" stroke-width="0.4"/><rect x="400.7" y="169" width="2.6" height="40.6" fill="url(#gyv)" stroke="#a87f00" stroke-width="0.4"/><rect x="352" y="199" width="30" height="11.5" rx="1.5" fill="url(#gy)" stroke="#a87f00" stroke-width="0.4"/><rect x="361" y="195.5" width="12" height="6" fill="url(#gy)" stroke="#a87f00" stroke-width="0.4"/><rect x="373.5" y="192.5" width="3.2" height="8" fill="url(#gyv)" stroke="#a87f00" stroke-width="0.4"/><rect x="331" y="212" width="56" height="3.2" fill="url(#gy)" stroke="#a87f00" stroke-width="0.4"/><rect x="393" y="198" width="4.6" height="12" rx="1.5" fill="url(#gyv)" stroke="#a87f00" stroke-width="0.4"/><circle cx="395.3" cy="199.6" r="2.6" fill="url(#gy)" stroke="#a87f00" stroke-width="0.4"/><circle cx="397.5" cy="210" r="4" fill="url(#gy)" stroke="#a87f00" stroke-width="0.4"/><path d="M326 214L343 206.5L352 204.5V209L344 210.5L330 216.5Z" fill="url(#gy)" stroke="#a87f00" stroke-width="0.4"/><rect x="261.5" y="215" width="154" height="6.6" rx="3" fill="url(#gy)" stroke="#a87f00" stroke-width="0.4"/><path d="M383 221L399.5 217.5L401 222L385.5 226Z" fill="url(#gy)" stroke="#a87f00" stroke-width="0.4"/><ellipse cx="384.6" cy="223.6" rx="2.4" ry="3" fill="url(#gy)" stroke="#a87f00" stroke-width="0.4"/><g stroke="#b98f00" stroke-width="0.5"><path d="M300 215V221.6M330 215V221.6M360 215V221.6M389 215V221.6M408 215V221.6"/></g><rect x="561" y="171.5" width="12.8" height="17" rx="0.8" fill="#8f8f8c" stroke="#222" stroke-width="0.9"/><rect x="563" y="174" width="3.6" height="3" fill="#ddd" stroke="#222" stroke-width="0.4"/><rect x="568.2" y="174" width="3.6" height="3" fill="#ddd" stroke="#222" stroke-width="0.4"/><circle cx="565.4" cy="182.6" r="1.8" fill="#333"/><rect x="575" y="171.5" width="12.8" height="17" rx="0.8" fill="#8f8f8c" stroke="#222" stroke-width="0.9"/><rect x="577" y="174" width="3.6" height="3" fill="#ddd" stroke="#222" stroke-width="0.4"/><rect x="582.2" y="174" width="3.6" height="3" fill="#ddd" stroke="#222" stroke-width="0.4"/><circle cx="579.4" cy="182.6" r="1.8" fill="#333"/><rect x="588" y="171.5" width="12.8" height="17" rx="0.8" fill="#8f8f8c" stroke="#222" stroke-width="0.9"/><rect x="590" y="174" width="3.6" height="3" fill="#ddd" stroke="#222" stroke-width="0.4"/><rect x="595.2" y="174" width="3.6" height="3" fill="#ddd" stroke="#222" stroke-width="0.4"/><circle cx="592.4" cy="182.6" r="1.8" fill="#333"/><path d="M470.6 163.4h3.4v6.4h-3.4z" fill="#1a1a1a"/><rect x="472" y="163.5" width="118.6" height="4.4" rx="1.5" fill="url(#gm)" stroke="#8a0080" stroke-width="0.4"/><rect x="534.6" y="165" width="4.7" height="50" fill="url(#gmv)" stroke="#8a0080" stroke-width="0.4"/><rect x="533.6" y="176.4" width="6.7" height="2.6" fill="url(#gm)" stroke="#8a0080" stroke-width="0.4"/><rect x="533.6" y="196" width="6.7" height="2.6" fill="url(#gm)" stroke="#8a0080" stroke-width="0.4"/><circle cx="539.2" cy="181" r="2.8" fill="url(#gm)" stroke="#8a0080" stroke-width="0.4"/><rect x="532.4" y="163" width="9" height="5.4" rx="1" fill="url(#gm)" stroke="#8a0080" stroke-width="0.4"/><rect x="556" y="165" width="4.7" height="50" fill="url(#gmv)" stroke="#8a0080" stroke-width="0.4"/><rect x="555" y="176.4" width="6.7" height="2.6" fill="url(#gm)" stroke="#8a0080" stroke-width="0.4"/><rect x="555" y="196" width="6.7" height="2.6" fill="url(#gm)" stroke="#8a0080" stroke-width="0.4"/><circle cx="560.6" cy="181" r="2.8" fill="url(#gm)" stroke="#8a0080" stroke-width="0.4"/><rect x="553.8" y="163" width="9" height="5.4" rx="1" fill="url(#gm)" stroke="#8a0080" stroke-width="0.4"/><rect x="577.9" y="165" width="4.7" height="50" fill="url(#gmv)" stroke="#8a0080" stroke-width="0.4"/><rect x="576.9" y="176.4" width="6.7" height="2.6" fill="url(#gm)" stroke="#8a0080" stroke-width="0.4"/><rect x="576.9" y="196" width="6.7" height="2.6" fill="url(#gm)" stroke="#8a0080" stroke-width="0.4"/><circle cx="582.5" cy="181" r="2.8" fill="url(#gm)" stroke="#8a0080" stroke-width="0.4"/><rect x="575.6999999999999" y="163" width="9" height="5.4" rx="1" fill="url(#gm)" stroke="#8a0080" stroke-width="0.4"/><rect x="519.8" y="217.3" width="114" height="5.3" rx="2.4" fill="url(#gm)" stroke="#8a0080" stroke-width="0.4"/><ellipse cx="549" cy="213.4" rx="4.4" ry="3.4" fill="url(#gm)" stroke="#8a0080" stroke-width="0.4"/><rect x="548.2" y="207.6" width="1.6" height="3" fill="url(#gm)" stroke="#8a0080" stroke-width="0.4"/><ellipse cx="559" cy="213.4" rx="4.4" ry="3.4" fill="url(#gm)" stroke="#8a0080" stroke-width="0.4"/><rect x="558.2" y="207.6" width="1.6" height="3" fill="url(#gm)" stroke="#8a0080" stroke-width="0.4"/><ellipse cx="569" cy="213.4" rx="4.4" ry="3.4" fill="url(#gm)" stroke="#8a0080" stroke-width="0.4"/><rect x="568.2" y="207.6" width="1.6" height="3" fill="url(#gm)" stroke="#8a0080" stroke-width="0.4"/><ellipse cx="579" cy="213.4" rx="4.4" ry="3.4" fill="url(#gm)" stroke="#8a0080" stroke-width="0.4"/><rect x="578.2" y="207.6" width="1.6" height="3" fill="url(#gm)" stroke="#8a0080" stroke-width="0.4"/><ellipse cx="589" cy="213.4" rx="4.4" ry="3.4" fill="url(#gm)" stroke="#8a0080" stroke-width="0.4"/><rect x="588.2" y="207.6" width="1.6" height="3" fill="url(#gm)" stroke="#8a0080" stroke-width="0.4"/><ellipse cx="598" cy="213.4" rx="4.4" ry="3.4" fill="url(#gm)" stroke="#8a0080" stroke-width="0.4"/><rect x="597.2" y="207.6" width="1.6" height="3" fill="url(#gm)" stroke="#8a0080" stroke-width="0.4"/><path d="M533 203.6H545V205.4H540.6V211H545.4V224Q539.5 231 533.4 224V211H537.4V205.4H533Z" fill="url(#gm)" stroke="#8a0080" stroke-width="0.4"/><circle cx="539.4" cy="220" r="3" fill="#d000c0" stroke="#8a0080" stroke-width="0.4"/><path d="M628.4 204H640.4V206H636.4L637.6 213H639V224Q634.6 229.6 630.6 224V213H632L633 206H628.4Z" fill="url(#gm)" stroke="#8a0080" stroke-width="0.4"/><circle cx="638" cy="224" r="3.4" fill="url(#gm)" stroke="#8a0080" stroke-width="0.4"/><circle cx="638.6" cy="224.4" r="1.6" fill="#c000b0"/></svg>
<svg style="left:0;top:0" width="900" height="485" viewBox="0 0 900 485"><rect x="203.20000000000002" y="310" width="3" height="115" fill="#dedede"/><rect x="212.6" y="310" width="3" height="115" fill="#dedede"/><path d="M203.20000000000002 321.4V425M215.6 321.4V425" stroke="#bbb" stroke-width="0.4"/><rect x="448.5" y="310" width="3" height="115" fill="#dedede"/><rect x="457.9" y="310" width="3" height="115" fill="#dedede"/><path d="M448.5 321.4V425M460.9 321.4V425" stroke="#bbb" stroke-width="0.4"/><rect x="694.0999999999999" y="310" width="3" height="115" fill="#dedede"/><rect x="703.5" y="310" width="3" height="115" fill="#dedede"/><path d="M694.0999999999999 321.4V425M706.5 321.4V425" stroke="#bbb" stroke-width="0.4"/><g fill="none" stroke="#444" stroke-width="0.75"><rect x="196.4" y="309.5" width="526.2" height="129.1"/></g><g fill="none" stroke="#9a9a9a" stroke-width="0.4"><path d="M196.4 313H722.6M196.4 428.3H722.6"/><path d="M236.4 428.3V438.6M340 428.3V438.6M455 428.3V438.6M560 428.3V438.6M670 428.3V438.6M224 309.5V313M300 309.5V313M380 309.5V313M455 309.5V313M500 309.5V313M560 309.5V313M600 309.5V313M640 309.5V313"/></g><g fill="none" stroke="#484848" stroke-width="0.85" stroke-dasharray="7 2.4"><path d="M196.4 315.6H722.6M196.4 321.4H722.6"/></g><path d="M196.4 424.9H722.6" stroke="#777" stroke-width="1" stroke-dasharray="6 1.6" fill="none"/><g stroke="#999" stroke-width="0.4" fill="none"><path d="M246 311.3h18M250 310v2.6M259 310v2.6"/><path d="M280 311.3h18M284 310v2.6M293 310v2.6"/><path d="M357 311.3h18M361 310v2.6M370 310v2.6"/><path d="M396 311.3h18M400 310v2.6M409 310v2.6"/><path d="M603 311.3h18M607 310v2.6M616 310v2.6"/><path d="M640 311.3h18M644 310v2.6M653 310v2.6"/></g><path d="M209.4 292V379.2M209.4 388.4V455" stroke="#333" stroke-width="0.6" stroke-dasharray="9 1.2 1.2 1.2" fill="none"/><circle cx="209.4" cy="383.8" r="4.5" fill="#fff" stroke="#333" stroke-width="0.6"/><circle cx="209.4" cy="459.6" r="4.5" fill="#fff" stroke="#333" stroke-width="0.6"/><text x="209.4" y="385.2" font-size="3.6" text-anchor="middle" fill="#222" font-family="Liberation Sans,sans-serif">5</text><text x="209.4" y="461" font-size="3.6" text-anchor="middle" fill="#222" font-family="Liberation Sans,sans-serif">5</text><path d="M454.7 292V379.2M454.7 388.4V455" stroke="#333" stroke-width="0.6" stroke-dasharray="9 1.2 1.2 1.2" fill="none"/><circle cx="454.7" cy="383.8" r="4.5" fill="#fff" stroke="#333" stroke-width="0.6"/><circle cx="454.7" cy="459.6" r="4.5" fill="#fff" stroke="#333" stroke-width="0.6"/><text x="454.7" y="385.2" font-size="3.6" text-anchor="middle" fill="#222" font-family="Liberation Sans,sans-serif">6</text><text x="454.7" y="461" font-size="3.6" text-anchor="middle" fill="#222" font-family="Liberation Sans,sans-serif">6</text><path d="M700.3 292V379.2M700.3 388.4V455" stroke="#333" stroke-width="0.6" stroke-dasharray="9 1.2 1.2 1.2" fill="none"/><circle cx="700.3" cy="383.8" r="4.5" fill="#fff" stroke="#333" stroke-width="0.6"/><circle cx="700.3" cy="459.6" r="4.5" fill="#fff" stroke="#333" stroke-width="0.6"/><text x="700.3" y="385.2" font-size="3.6" text-anchor="middle" fill="#222" font-family="Liberation Sans,sans-serif">7</text><text x="700.3" y="461" font-size="3.6" text-anchor="middle" fill="#222" font-family="Liberation Sans,sans-serif">7</text><circle cx="176.5" cy="315.2" r="2.7" fill="#fff" stroke="#1a3fd0" stroke-width="0.7"/><path d="M176.5 315.2V312.5A2.7 2.7 0 0 0 173.8 315.2ZM176.5 315.2V317.9A2.7 2.7 0 0 0 179.2 315.2Z" fill="#1a3fd0"/><text x="182.3" y="314.2" font-size="3.5" fill="#111" font-family="Liberation Sans,sans-serif" textLength="13" lengthAdjust="spacingAndGlyphs">ระดับพื้นชั้น 1</text><circle cx="176.5" cy="320.4" r="2.7" fill="#fff" stroke="#1a3fd0" stroke-width="0.7"/><path d="M176.5 320.4V317.7A2.7 2.7 0 0 0 173.8 320.4ZM176.5 320.4V323.09999999999997A2.7 2.7 0 0 0 179.2 320.4Z" fill="#1a3fd0"/><text x="182.3" y="319.4" font-size="3.5" fill="#111" font-family="Liberation Sans,sans-serif" textLength="13" lengthAdjust="spacingAndGlyphs">ระดับพื้นดิน</text><circle cx="176.3" cy="424.7" r="2.7" fill="#fff" stroke="#1a3fd0" stroke-width="0.7"/><path d="M176.3 424.7V422.0A2.7 2.7 0 0 0 173.60000000000002 424.7ZM176.3 424.7V427.4A2.7 2.7 0 0 0 179.0 424.7Z" fill="#1a3fd0"/><text x="182.10000000000002" y="423.7" font-size="3.5" fill="#111" font-family="Liberation Sans,sans-serif" textLength="13" lengthAdjust="spacingAndGlyphs">ระดับพื้นชั้นใต้ดิน</text><path d="M176 315.2H196.4M176 320.4H196.4M176 424.7H196.4" stroke="#333" stroke-width="0.5"/><circle cx="742.6" cy="314.9" r="2.7" fill="#fff" stroke="#1a3fd0" stroke-width="0.7"/><path d="M742.6 314.9V312.2A2.7 2.7 0 0 0 739.9 314.9ZM742.6 314.9V317.59999999999997A2.7 2.7 0 0 0 745.3000000000001 314.9Z" fill="#1a3fd0"/><text x="723.6" y="313.9" font-size="3.5" fill="#111" font-family="Liberation Sans,sans-serif" textLength="13" lengthAdjust="spacingAndGlyphs">ระดับพื้นชั้น 1</text><circle cx="742.6" cy="319.8" r="2.7" fill="#fff" stroke="#1a3fd0" stroke-width="0.7"/><path d="M742.6 319.8V317.1A2.7 2.7 0 0 0 739.9 319.8ZM742.6 319.8V322.5A2.7 2.7 0 0 0 745.3000000000001 319.8Z" fill="#1a3fd0"/><text x="723.6" y="318.8" font-size="3.5" fill="#111" font-family="Liberation Sans,sans-serif" textLength="13" lengthAdjust="spacingAndGlyphs">ระดับพื้นดิน</text><circle cx="742.6" cy="424.5" r="2.7" fill="#fff" stroke="#1a3fd0" stroke-width="0.7"/><path d="M742.6 424.5V421.8A2.7 2.7 0 0 0 739.9 424.5ZM742.6 424.5V427.2A2.7 2.7 0 0 0 745.3000000000001 424.5Z" fill="#1a3fd0"/><text x="723.6" y="423.5" font-size="3.5" fill="#111" font-family="Liberation Sans,sans-serif" textLength="13" lengthAdjust="spacingAndGlyphs">ระดับพื้นชั้นใต้ดิน</text><path d="M722.6 314.9H742M722.6 319.8H742M722.6 424.5H742" stroke="#333" stroke-width="0.5"/><g fill="none" stroke="#a8a8a8" stroke-width="0.6"><rect x="306.5" y="368" width="52.0" height="56.8"/><rect x="308.7" y="370.2" width="47.6" height="54.6"/><path d="M332.5 370.2V424.8"/><path d="M308.7 397.5L332.5 370.2L356.3 397.5L332.5 424.8Z" stroke-dasharray="3 1" stroke="#bbb"/></g><g fill="none" stroke="#a8a8a8" stroke-width="0.6"><rect x="552.5" y="368" width="48.5" height="56.8"/><rect x="554.7" y="370.2" width="44.1" height="54.6"/><path d="M576.75 370.2V424.8"/><path d="M554.7 397.5L576.75 370.2L598.8 397.5L576.75 424.8Z" stroke-dasharray="3 1" stroke="#bbb"/></g><g stroke="#b5b5b5" stroke-width="1.2"><path d="M554.7 371.5H598.8M554.7 396.5H598.8"/></g><g stroke="#b9b9b9" stroke-width="0.5" fill="none"><path d="M308.7 396H356.3M308.7 397.6H356.3"/></g><rect x="219.6" y="411.3" width="33" height="13.4" fill="#bdbdbd" stroke="#555" stroke-width="0.6"/><path d="M227.4 396V411.3M244.7 396V411.3" stroke="#e01010" stroke-width="2.2"/><path d="M226.3 396V411.3M228.5 396V411.3M243.6 396V411.3M245.8 396V411.3" stroke="#700" stroke-width="0.3"/><circle cx="236" cy="386.6" r="12.8" fill="#ee1111" stroke="#600" stroke-width="0.6"/><path d="M236 373.8V399.4" stroke="#222" stroke-width="1.3"/><path d="M236 361V374" stroke="#222" stroke-width="1"/><rect x="234.6" y="358.3" width="2.8" height="3.6" rx="1.2" fill="#fff" stroke="#222" stroke-width="0.6"/><path d="M236 399.4V402M234.5 401.5h3l-1.5 1.8z" stroke="#222" stroke-width="0.6" fill="#222"/><rect x="254.6" y="383" width="13.4" height="18" rx="0.8" fill="#fff" stroke="#1c1c1c" stroke-width="0.95"/><rect x="255.79999999999998" y="384.2" width="11.0" height="15.6" fill="none" stroke="#666" stroke-width="0.3"/><rect x="257" y="387.5" width="3.4" height="5" fill="none" stroke="#222" stroke-width="0.6"/><rect x="262" y="387.5" width="3.4" height="3.4" fill="none" stroke="#222" stroke-width="0.6"/><path d="M264.5 393V397.5M263.5 396.5l1 1.6l1-1.6z" stroke="#222" stroke-width="0.5"/><rect x="273.8" y="373.8" width="18.2" height="27.4" rx="0.8" fill="#fff" stroke="#1c1c1c" stroke-width="0.95"/><rect x="275.0" y="375.0" width="15.799999999999999" height="25.0" fill="none" stroke="#666" stroke-width="0.3"/><g fill="none" stroke="#222" stroke-width="0.6"><rect x="276.6" y="379.5" width="3.6" height="3.6"/><rect x="281.4" y="379.5" width="3.6" height="3.6"/><rect x="286" y="379.5" width="3" height="3.6"/><rect x="276.6" y="385.5" width="5" height="8.5"/></g><rect x="618" y="360" width="19.4" height="28" rx="0.8" fill="#fff" stroke="#1c1c1c" stroke-width="0.95"/><rect x="619.2" y="361.2" width="17.0" height="25.6" fill="none" stroke="#666" stroke-width="0.3"/><g fill="none" stroke="#222" stroke-width="0.6"><rect x="621" y="363.6" width="5.6" height="4.4" rx="0.6"/><rect x="628" y="363.6" width="4" height="4.4" rx="0.6"/><circle cx="623.8" cy="372.6" r="2.6"/><rect x="621.4" y="375.2" width="4.8" height="6.4"/><path d="M631 370.5V375.5" stroke-width="1"/></g><rect x="634" y="364" width="1.8" height="8" fill="#222"/><rect x="642.6" y="360" width="19.4" height="28" rx="0.8" fill="#fff" stroke="#1c1c1c" stroke-width="0.95"/><rect x="643.8000000000001" y="361.2" width="17.0" height="25.6" fill="none" stroke="#666" stroke-width="0.3"/><g fill="none" stroke="#222" stroke-width="0.6"><rect x="645.6" y="363.6" width="5.6" height="4.4" rx="0.6"/><rect x="652.6" y="363.6" width="4" height="4.4" rx="0.6"/><circle cx="648.4" cy="372.6" r="2.6"/><rect x="646.0" y="375.2" width="4.8" height="6.4"/><path d="M655.6 370.5V375.5" stroke-width="1"/></g><rect x="658.6" y="364" width="1.8" height="8" fill="#222"/><rect x="667.2" y="360" width="19.4" height="28" rx="0.8" fill="#fff" stroke="#1c1c1c" stroke-width="0.95"/><rect x="668.4000000000001" y="361.2" width="17.0" height="25.6" fill="none" stroke="#666" stroke-width="0.3"/><g fill="none" stroke="#222" stroke-width="0.6"><rect x="670.2" y="363.6" width="5.6" height="4.4" rx="0.6"/><rect x="677.2" y="363.6" width="4" height="4.4" rx="0.6"/><circle cx="673.0" cy="372.6" r="2.6"/><rect x="670.6" y="375.2" width="4.8" height="6.4"/><path d="M680.2 370.5V375.5" stroke-width="1"/></g><rect x="683.2" y="364" width="1.8" height="8" fill="#222"/><path d="M298.0 321.8H303.20000000000005V323.2L302.0 325.4H299.20000000000005L298.0 323.2Z" fill="#1a1a1a"/><path d="M300.0 325V359M301.20000000000005 325V359" stroke="#1a1a1a" stroke-width="0.45"/><rect x="299.6" y="348.5" width="2" height="9.6" fill="#fff" stroke="#3a3a3a" stroke-width="0.55"/><path d="M299.6 352h2M299.6 355h2" stroke="#3a3a3a" stroke-width="0.4"/><path d="M309.59999999999997 321.8H314.8V323.2L313.59999999999997 325.4H310.8L309.59999999999997 323.2Z" fill="#1a1a1a"/><path d="M311.59999999999997 325V359M312.8 325V359" stroke="#1a1a1a" stroke-width="0.45"/><rect x="311.2" y="348.5" width="2" height="9.6" fill="#fff" stroke="#3a3a3a" stroke-width="0.55"/><path d="M311.2 352h2M311.2 355h2" stroke="#3a3a3a" stroke-width="0.4"/><path d="M368.29999999999995 321.8H373.5V323.2L372.29999999999995 325.4H369.5L368.29999999999995 323.2Z" fill="#1a1a1a"/><path d="M370.29999999999995 325V359M371.5 325V359" stroke="#1a1a1a" stroke-width="0.45"/><rect x="369.9" y="348.5" width="2" height="9.6" fill="#fff" stroke="#3a3a3a" stroke-width="0.55"/><path d="M369.9 352h2M369.9 355h2" stroke="#3a3a3a" stroke-width="0.4"/><path d="M426.0 321.8H431.20000000000005V323.2L430.0 325.4H427.20000000000005L426.0 323.2Z" fill="#1a1a1a"/><path d="M428.0 325V359M429.20000000000005 325V359" stroke="#1a1a1a" stroke-width="0.45"/><rect x="427.6" y="348.5" width="2" height="9.6" fill="#fff" stroke="#3a3a3a" stroke-width="0.55"/><path d="M427.6 352h2M427.6 355h2" stroke="#3a3a3a" stroke-width="0.4"/><path d="M468.4 321.8H473.6V323.2L472.4 325.4H469.6L468.4 323.2Z" fill="#1a1a1a"/><path d="M470.4 325V359M471.6 325V359" stroke="#1a1a1a" stroke-width="0.45"/><rect x="470" y="348.5" width="2" height="9.6" fill="#fff" stroke="#3a3a3a" stroke-width="0.55"/><path d="M470 352h2M470 355h2" stroke="#3a3a3a" stroke-width="0.4"/><path d="M481.4 321.8H486.6V323.2L485.4 325.4H482.6L481.4 323.2Z" fill="#1a1a1a"/><path d="M483.4 325V359M484.6 325V359" stroke="#1a1a1a" stroke-width="0.45"/><rect x="483" y="348.5" width="2" height="9.6" fill="#fff" stroke="#3a3a3a" stroke-width="0.55"/><path d="M483 352h2M483 355h2" stroke="#3a3a3a" stroke-width="0.4"/><path d="M522.1 321.8H527.3000000000001V323.2L526.1 325.4H523.3000000000001L522.1 323.2Z" fill="#1a1a1a"/><path d="M524.1 325V359M525.3000000000001 325V359" stroke="#1a1a1a" stroke-width="0.45"/><rect x="523.7" y="348.5" width="2" height="9.6" fill="#fff" stroke="#3a3a3a" stroke-width="0.55"/><path d="M523.7 352h2M523.7 355h2" stroke="#3a3a3a" stroke-width="0.4"/><path d="M561.1999999999999 321.8H566.4V323.2L565.1999999999999 325.4H562.4L561.1999999999999 323.2Z" fill="#1a1a1a"/><path d="M563.1999999999999 325V359M564.4 325V359" stroke="#1a1a1a" stroke-width="0.45"/><rect x="562.8" y="348.5" width="2" height="9.6" fill="#fff" stroke="#3a3a3a" stroke-width="0.55"/><path d="M562.8 352h2M562.8 355h2" stroke="#3a3a3a" stroke-width="0.4"/><path d="M587.6999999999999 321.8H592.9V323.2L591.6999999999999 325.4H588.9L587.6999999999999 323.2Z" fill="#1a1a1a"/><path d="M589.6999999999999 325V359M590.9 325V359" stroke="#1a1a1a" stroke-width="0.45"/><rect x="589.3" y="348.5" width="2" height="9.6" fill="#fff" stroke="#3a3a3a" stroke-width="0.55"/><path d="M589.3 352h2M589.3 355h2" stroke="#3a3a3a" stroke-width="0.4"/><path d="M610.1999999999999 321.8H615.4V323.2L614.1999999999999 325.4H611.4L610.1999999999999 323.2Z" fill="#1a1a1a"/><path d="M612.1999999999999 325V359M613.4 325V359" stroke="#1a1a1a" stroke-width="0.45"/><rect x="611.8" y="348.5" width="2" height="9.6" fill="#fff" stroke="#3a3a3a" stroke-width="0.55"/><path d="M611.8 352h2M611.8 355h2" stroke="#3a3a3a" stroke-width="0.4"/><path d="M299.0 347.6h3.2l1.8 2.4v5.6q-3.4 5.4 -6.8 0v-5.6z" fill="#1c1c1c"/><path d="M297.6 351.4h6M297.6 353.6h6M298.0 355.8h5.2" stroke="#e8e8e8" stroke-width="0.45"/><path d="M300.6 350V358" stroke="#e8e8e8" stroke-width="0.4"/><path d="M469.0 347.6h3.2l1.8 2.4v5.6q-3.4 5.4 -6.8 0v-5.6z" fill="#1c1c1c"/><path d="M467.6 351.4h6M467.6 353.6h6M468.0 355.8h5.2" stroke="#e8e8e8" stroke-width="0.45"/><path d="M470.6 350V358" stroke="#e8e8e8" stroke-width="0.4"/><g fill="none" stroke="#f39a3e" stroke-width="0.68"><path d="M289.8 412.5V359Q289.8 354.4 294.4 354.4H438.4Q443 354.4 443 359V393"/><path d="M294 412.5V361Q294 358.6 296.4 358.6H436Q438.6 358.6 438.6 361V393"/><path d="M292 412.5V359.5Q292 356.5 295 356.5H437.5Q441 356.5 441 360V393" stroke-width="0.3"/><path d="M438 393h5.6v3.5h-5.6zM438.3 396.5h5v6.5q-2.5 3 -5 0z"/><path d="M363 359V400M367.8 359V400M365.4 359V400" /><path d="M362.4 400h6v5h-6zM361.6 405h7.6v7h-7.6z"/><path d="M247 412.2H406.5V418.4H247ZM247 415.3H406.5" /><path d="M249.2 412.2V418.4M251 412.2V418.4"/><g stroke="#e8801c"><circle cx="291" cy="414.6" r="4.2"/><circle cx="291" cy="414.6" r="2.2"/><path d="M287 409.6h8M288.6 406.4h4.8v3.2h-4.8zM295.2 413h4v3.4h-4zM299.2 411.6h2v6h-2zM301.2 414.6h5.2"/><circle cx="306.6" cy="411.6" r="1.2" fill="#e8801c"/></g><circle cx="363.8" cy="415.2" r="4.4"/><circle cx="363.8" cy="415.2" r="2.2"/><path d="M362 399.4h3.8l1.6 2v5.6l-1.4 2.4h-4.2l-1.4-2.4v-5.6zM360.8 419.6h6l-1 3.4h-4z"/><circle cx="385.7" cy="415.2" r="2.6"/><rect x="382.2" y="412.4" width="7" height="5.6"/><path d="M306 420.3H348V423H306ZM270.5 424.6V421.8H306"/><path d="M308.6 401.4h12v2.6h14v-3.4h3v-8.6h-2.6v-1h5.6v1h-0.4v8.6M308.6 401.4v13.6h12v1.8h16.6v-1.8M320.6 404v11M311 404.6h7.6v4h-7.6zM324 403.4a3 3 0 1 0 0.1 0M337.6 400.6q5.2-1 5.2 4v8q0 4-5.2 3.8M329.4 404v11.6M326 416.8v3.5M343 416.8v3.5M312 416.8v3.5"/><path d="M293.5 386.5h2.6v5h-2.6zM292 388.5h6" stroke="#c46a10" stroke-width="0.9"/><rect x="290.8" y="385.6" width="3.4" height="5.4" fill="#f0a040" stroke="#a05a10" stroke-width="0.4"/></g><g fill="none" stroke="#aa2cba" stroke-width="0.72"><path d="M469 354.3H616.6V359.4H473.5Q469 359.4 469 354.3ZM469 356.8H616.6" /><path d="M467.5 349V356Q467.5 359.4 471 359.4" stroke="#222"/><path d="M547.6999999999999 362V424.6M551.9 362V424.6M549.8 362V424.6"/><path d="M545.5999999999999 354.3v3.4l2 2.4v2h4.4v-2l2-2.4v-3.4"/><path d="M547.1999999999999 356.4L549.8 359.6L552.4 356.4"/><rect x="546.8" y="372" width="6" height="5.6" rx="1.6"/><path d="M547.0 390.6h5.6M547.0 392h5.6M547.0 396.4h5.6M547.0 397.8h5.6" stroke-width="0.9"/><circle cx="549.8" cy="417.4" r="3.6"/><circle cx="549.8" cy="417.4" r="1.8"/><path d="M546.8 410.6h6M546.4 412h6.8M545.1999999999999 422h9.2v2.6h-9.2z"/><path d="M574.6999999999999 362V424.6M578.9 362V424.6M576.8 362V424.6"/><path d="M572.5999999999999 354.3v3.4l2 2.4v2h4.4v-2l2-2.4v-3.4"/><path d="M574.1999999999999 356.4L576.8 359.6L579.4 356.4"/><rect x="573.8" y="372" width="6" height="5.6" rx="1.6"/><path d="M574.0 390.6h5.6M574.0 392h5.6M574.0 396.4h5.6M574.0 397.8h5.6" stroke-width="0.9"/><circle cx="576.8" cy="417.4" r="3.6"/><circle cx="576.8" cy="417.4" r="1.8"/><path d="M573.8 410.6h6M573.4 412h6.8M572.1999999999999 422h9.2v2.6h-9.2z"/><path d="M602.0 362V424.6M606.2 362V424.6M604.1 362V424.6"/><path d="M599.9 354.3v3.4l2 2.4v2h4.4v-2l2-2.4v-3.4"/><path d="M601.5 356.4L604.1 359.6L606.7 356.4"/><rect x="601.1" y="372" width="6" height="5.6" rx="1.6"/><path d="M601.3000000000001 390.6h5.6M601.3000000000001 392h5.6M601.3000000000001 396.4h5.6M601.3000000000001 397.8h5.6" stroke-width="0.9"/><circle cx="604.1" cy="417.4" r="3.6"/><circle cx="604.1" cy="417.4" r="1.8"/><path d="M601.1 410.6h6M600.7 412h6.8M599.5 422h9.2v2.6h-9.2z"/><path d="M517 414H636.8V420H517ZM517 417H636.8"/><path d="M519 414V420M634.6 414V420"/><path d="M527.6 398.6h6.8M528.8 397.4h4.4v2.4h-4.4zM530.2 399.8v4h1.6v-4M529 403.8h4l1 4v6.2h-6v-6.2z"/><rect x="527.2" y="412.6" width="7.6" height="8.6" rx="1.2"/><circle cx="531" cy="417" r="2.2"/><path d="M620.4 398.6h6.8M621.5999999999999 397.4h4.4v2.4h-4.4zM623.0 399.8v4h1.6v-4M621.8 403.8h4l1 4v6.2h-6v-6.2z"/><rect x="620.0" y="412.6" width="7.6" height="8.6" rx="1.2"/><circle cx="623.8" cy="417" r="2.2"/></g></svg>
<svg style="left:0;top:0" width="900" height="485" viewBox="0 0 900 485"><g opacity="0.27" fill="none" stroke="#4fa777" stroke-linecap="round"><path d="M192.5 233.1A32.5 32.5 0 1 1 255 216.4" stroke-width="9"/><path d="M161 218Q149 262 176 286Q200 306 226 300" stroke-width="10"/><path d="M226 300Q246 292 252 264" stroke-width="8"/><path d="M283 226Q293 245 279 263" stroke-width="7"/><path d="M227 240V262" stroke-width="5"/><path d="M213 240Q213 252 220 258M241 244Q246 254 238 262" stroke-width="4.5"/><path d="M196 256Q204 272 222 275M252 262Q246 274 232 277" stroke-width="4"/></g><text x="309" y="260" font-size="42" fill="#4fa777" opacity="0.27" font-family="Liberation Sans,sans-serif" textLength="441" lengthAdjust="spacingAndGlyphs">SYNERGYSOFT</text></svg>
<div class="a" style="left:420.2px;top:477.8px;width:96.5px;height:8px;background:#ffffff;border:0.5px solid #c4c4c4;box-sizing:border-box"></div>
<svg style="left:509px;top:482.4px" width="4" height="2.6" viewBox="0 0 8 5"><path d="M0.5 0.5L4 4.2L7.5 0.5" stroke="#999" stroke-width="1.2" fill="none"/></svg>
<div class="a" style="left:568px;top:477.8px;width:96.5px;height:8px;background:#e9e9e9;border:0.5px solid #c8c8c8;box-sizing:border-box"></div>
<div class="t" style="left:569.8px;top:480px;color:#999;font-size:6.8px">Main Model</div>
<svg style="left:657px;top:482.4px" width="4" height="2.6" viewBox="0 0 8 5"><path d="M0.5 0.5L4 4.2L7.5 0.5" stroke="#999" stroke-width="1.2" fill="none"/></svg>
<svg style="left:0;top:0" width="900" height="485" viewBox="0 0 900 485"><circle cx="411.4" cy="481.6" r="1.8" fill="#4f8fd0"/><circle cx="414" cy="482.6" r="1.8" fill="#6fae58"/><path d="M408.6 486q0-3 2.8-3t2.8 3zM411.6 486.6q0-3 2.6-3t2.6 3z" fill="#4f8fd0" opacity="0.9"/><path d="M522 482.5l1.6 2.5M524 481.8v3" stroke="#999" stroke-width="0.7"/><circle cx="533.6" cy="481.6" r="1.5" fill="none" stroke="#333" stroke-width="0.7"/><path d="M533.6 483v2" stroke="#333" stroke-width="0.7"/><rect x="545.6" y="480.2" width="6.4" height="6" fill="#e9eef4" stroke="#234" stroke-width="0.8"/><path d="M545.6 482h6.4M547.8 482v4" stroke="#234" stroke-width="0.6"/><rect x="558" y="480.6" width="4.4" height="5" fill="#aaa"/><path d="M782 479.8h6l-1.4 2.6v2.6h-3.2v-2.6z" fill="#f0b429" stroke="#8a6510" stroke-width="0.5"/><path d="M795 485v-3.6l3-2l3 2V485z" fill="#f4f8ff" stroke="#2f6fb5" stroke-width="0.8"/><circle cx="799.6" cy="483.6" r="1.2" fill="#2f6fb5"/><path d="M807.4 485v-3.4l2.4-1.8l2.4 1.8V485z" fill="#f0a24a" stroke="#a85a10" stroke-width="0.6"/><path d="M811.6 482.4l2.6 2.6" stroke="#667" stroke-width="0.8"/><rect x="818.8" y="480.6" width="4.4" height="5" fill="#dceafa" stroke="#1f5fa8" stroke-width="0.8"/><path d="M822.6 479.4l2.6 2.6M825.2 479.4l-2.6 2.6" stroke="#d01818" stroke-width="0.9"/><path d="M830.6 481h4.4M832.8 479.6v5.4" stroke="#222" stroke-width="1.1"/><path d="M835 479.4l2.6 2.6M837.6 479.4l-2.6 2.6" stroke="#d01818" stroke-width="0.9"/><path d="M843.6 485v-2.4l2.6-1.8l2.6 1.8V485" fill="#e6e6e6" stroke="#aaa" stroke-width="0.7"/><path d="M853.6 480h7l-2.6 3.2V485.4h-1.8v-2.2z" fill="#f4f4f4" stroke="#333" stroke-width="0.8"/><text x="862.4" y="486.4" font-size="5" fill="#333" font-family="Liberation Sans,sans-serif">:0</text></svg>
</div></body></html>
